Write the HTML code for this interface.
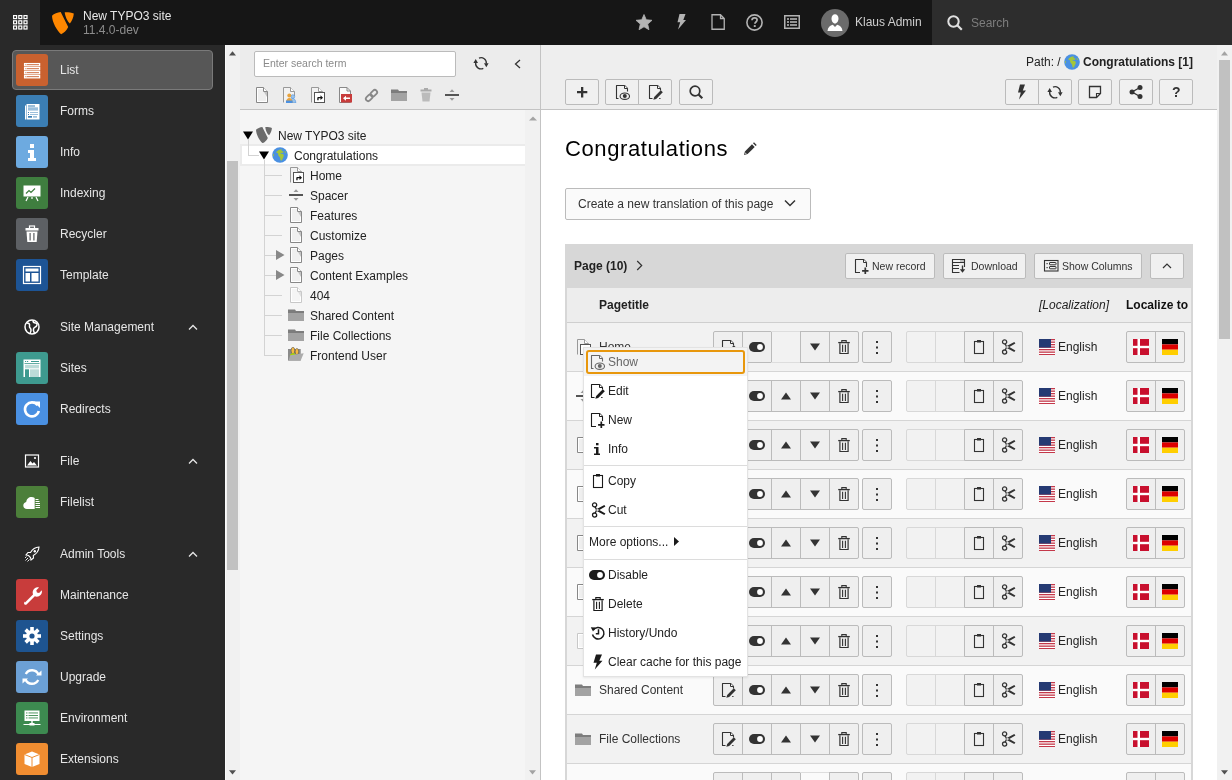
<!DOCTYPE html><html><head><meta charset="utf-8"><style>
html,body{margin:0;padding:0;width:1232px;height:780px;overflow:hidden;background:#fff;font-family:"Liberation Sans",sans-serif;font-size:12px;}
*{box-sizing:border-box}
</style></head><body><div style="position:relative;width:1232px;height:780px;overflow:hidden;will-change:transform">
<div style="position:absolute;left:0px;top:0px;width:1232px;height:45px;background:#161616"></div>
<div style="position:absolute;left:0px;top:0px;width:40px;height:45px;background:#292929"></div>
<svg style="position:absolute;left:13px;top:15px;" width="15" height="15" viewBox="0 0 15 15"><rect x="0.6" y="0.6" width="3" height="3" fill="none" stroke="#fff" stroke-width="1.2"/><rect x="5.8" y="0.6" width="3" height="3" fill="none" stroke="#fff" stroke-width="1.2"/><rect x="11.0" y="0.6" width="3" height="3" fill="none" stroke="#fff" stroke-width="1.2"/><rect x="0.6" y="5.8" width="3" height="3" fill="none" stroke="#fff" stroke-width="1.2"/><rect x="5.8" y="5.8" width="3" height="3" fill="none" stroke="#fff" stroke-width="1.2"/><rect x="11.0" y="5.8" width="3" height="3" fill="none" stroke="#fff" stroke-width="1.2"/><rect x="0.6" y="11.0" width="3" height="3" fill="none" stroke="#fff" stroke-width="1.2"/><rect x="5.8" y="11.0" width="3" height="3" fill="none" stroke="#fff" stroke-width="1.2"/><rect x="11.0" y="11.0" width="3" height="3" fill="none" stroke="#fff" stroke-width="1.2"/></svg>
<svg style="position:absolute;left:52px;top:12px;" width="22" height="23" viewBox="0 0 22 23"><path d="M0 3.7C2 1.7 5.5.3 8.7 0L16.2 15C14.5 18.5 12 20.8 9.1 22.2 5 18.5.2 10.5 0 3.7z M12.7.2C15.5 0 19.5.5 21.8 1.4 21.7 5.2 19.8 9.2 17.9 11.4 15.3 9.2 13.2 4.5 12.7.2z" fill="#ff8700"/></svg>
<div style="position:absolute;left:83px;top:9.84px;font:normal 12px/12px 'Liberation Sans', sans-serif;white-space:nowrap;color:#e8e8e8;">New TYPO3 site</div>
<div style="position:absolute;left:83px;top:23.84px;font:normal 12px/12px 'Liberation Sans', sans-serif;white-space:nowrap;color:#8c8c8c;">11.4.0-dev</div>
<svg style="position:absolute;left:636px;top:14px;" width="16" height="16" viewBox="0 0 16 16"><path d="M8.00 0.50 L10.29 5.74 L15.99 6.30 L11.71 10.11 L12.94 15.70 L8.00 12.80 L3.06 15.70 L4.29 10.11 L0.01 6.30 L5.71 5.74z" fill="#b3b3b3" stroke="#b3b3b3" stroke-width=".8" stroke-linejoin="round"/></svg>
<svg style="position:absolute;left:677px;top:14px;" width="9" height="16" viewBox="0 0 9 16"><path d="M2.5 0H8.5L6.3 6H9L1 15.5l2.2-7.3H.5z" fill="#b3b3b3"/></svg>
<svg style="position:absolute;left:711px;top:14px;" width="14" height="16" viewBox="0 0 14 16"><path d="M1 .75h8.5l3.75 3.75v10.75H1z M9.5 .75v3.75h3.75" fill="none" stroke="#b3b3b3" stroke-width="1.3"/></svg>
<svg style="position:absolute;left:746px;top:14px;" width="17" height="17" viewBox="0 0 17 17"><circle cx="8.5" cy="8.5" r="7.6" fill="none" stroke="#b3b3b3" stroke-width="1.6"/><path d="M6 6.3c0-1.5 1.1-2.4 2.6-2.4 1.5 0 2.5.9 2.5 2.2 0 1.8-2.2 2-2.2 3.6" fill="none" stroke="#b3b3b3" stroke-width="1.7"/><rect x="7.8" y="11.1" width="1.9" height="1.9" fill="#b3b3b3"/></svg>
<svg style="position:absolute;left:784px;top:15px;" width="16" height="14" viewBox="0 0 16 14"><rect x=".75" y=".75" width="14.5" height="12.5" fill="none" stroke="#b3b3b3" stroke-width="1.5"/><rect x="3" y="3.2" width="2" height="1.6" fill="#b3b3b3"/><rect x="6" y="3.2" width="7" height="1.6" fill="#b3b3b3"/><rect x="3" y="6.2" width="2" height="1.6" fill="#b3b3b3"/><rect x="6" y="6.2" width="7" height="1.6" fill="#b3b3b3"/><rect x="3" y="9.2" width="2" height="1.6" fill="#b3b3b3"/><rect x="6" y="9.2" width="7" height="1.6" fill="#b3b3b3"/></svg>
<svg style="position:absolute;left:821px;top:9px;" width="28" height="28" viewBox="0 0 28 28"><circle cx="14" cy="14" r="14" fill="#6b6b6b"/><path d="M10.5 9.5c0-2.6 1.5-4.3 3.5-4.3s3.5 1.7 3.5 4.3c0 2.4-1.5 5-3.5 5s-3.5-2.6-3.5-5zM6.5 22c.3-3.5 2.5-5.5 5.3-6.2l2.2 2.2 2.2-2.2c2.8.7 5 2.7 5.3 6.2z" fill="#fff"/></svg>
<div style="position:absolute;left:855px;top:15.84px;font:normal 12px/12px 'Liberation Sans', sans-serif;white-space:nowrap;color:#cfcfcf;">Klaus Admin</div>
<div style="position:absolute;left:932px;top:0px;width:300px;height:45px;background:#2d2d2d"></div>
<svg style="position:absolute;left:947px;top:15px;" width="16" height="16" viewBox="0 0 16 16"><circle cx="6.5" cy="6.5" r="5.2" fill="none" stroke="#e0e0e0" stroke-width="2"/><path d="M10.3 10.3l4.5 4.5" stroke="#e0e0e0" stroke-width="2.2"/></svg>
<div style="position:absolute;left:971px;top:16.84px;font:normal 12px/12px 'Liberation Sans', sans-serif;white-space:nowrap;color:#7d7d7d;">Search</div>
<div style="position:absolute;left:0px;top:45px;width:225px;height:735px;background:#292929"></div>
<div style="position:absolute;left:12px;top:50px;width:201px;height:40px;background:#575757;border:1px solid #7a7a7a;border-radius:4px"></div>
<div style="position:absolute;left:16px;top:54px;width:32px;height:32px;background:#c9612f;border-radius:3px"></div>
<svg style="position:absolute;left:16px;top:54px;" width="32" height="32" viewBox="0 0 32 32"><g fill="none" stroke="#fff" stroke-width="1.3"><rect x="8.6" y="9.6" width="15" height="2.2"/><rect x="8.6" y="13.6" width="15" height="2.2"/><rect x="8.6" y="17.6" width="15" height="2.2"/><rect x="8.6" y="21.6" width="15" height="2.2"/></g><g fill="#fff"><rect x="9.8" y="10.3" width="1" height="1"/><rect x="9.8" y="14.3" width="1" height="1"/><rect x="9.8" y="18.3" width="1" height="1"/><rect x="9.8" y="22.3" width="1" height="1"/></g></svg>
<div style="position:absolute;left:60px;top:63.84px;font:normal 12px/12px 'Liberation Sans', sans-serif;white-space:nowrap;color:#e6e6e6;">List</div>
<div style="position:absolute;left:16px;top:95px;width:32px;height:32px;background:#3b7eb4;border-radius:3px"></div>
<svg style="position:absolute;left:16px;top:95px;" width="32" height="32" viewBox="0 0 32 32"><path d="M9 10.5h1v14H9z" fill="#fff"/><rect x="10.5" y="9" width="13" height="15.5" fill="#fff"/><rect x="12" y="10.5" width="7" height="1" fill="#3b7eb4"/><rect x="12" y="12.3" width="10" height="3.3" fill="#9bbfdc"/><rect x="12" y="17" width="1" height="1" fill="#3b7eb4"/><rect x="14" y="17" width="8" height="1" fill="#9bbfdc"/><rect x="12" y="19" width="1" height="1" fill="#3b7eb4"/><rect x="14" y="19" width="8" height="1" fill="#9bbfdc"/><rect x="12" y="21" width="4" height="1.7" fill="#3b7eb4"/><rect x="17" y="21" width="4" height="1.7" fill="#9bbfdc"/></svg>
<div style="position:absolute;left:60px;top:104.84px;font:normal 12px/12px 'Liberation Sans', sans-serif;white-space:nowrap;color:#e6e6e6;">Forms</div>
<div style="position:absolute;left:16px;top:136px;width:32px;height:32px;background:#6daae0;border-radius:3px"></div>
<svg style="position:absolute;left:16px;top:136px;" width="32" height="32" viewBox="0 0 32 32"><rect x="14" y="8" width="4" height="4" fill="#fff"/><path d="M12 14h6v8h2v3h-8v-3h2v-5h-2z" fill="#fff"/></svg>
<div style="position:absolute;left:60px;top:145.84px;font:normal 12px/12px 'Liberation Sans', sans-serif;white-space:nowrap;color:#e6e6e6;">Info</div>
<div style="position:absolute;left:16px;top:177px;width:32px;height:32px;background:#3f7e3f;border-radius:3px"></div>
<svg style="position:absolute;left:16px;top:177px;" width="32" height="32" viewBox="0 0 32 32"><rect x="7.5" y="8.5" width="17" height="11" fill="#fff"/><path d="M10 16.5l3-3 2 2 4-4" fill="none" stroke="#3f7e3f" stroke-width="1.2"/><path d="M12 20l-2 4M20 20l2 4M16 20v2" stroke="#fff" stroke-width="1.2"/></svg>
<div style="position:absolute;left:60px;top:186.84px;font:normal 12px/12px 'Liberation Sans', sans-serif;white-space:nowrap;color:#e6e6e6;">Indexing</div>
<div style="position:absolute;left:16px;top:218px;width:32px;height:32px;background:#5d6064;border-radius:3px"></div>
<svg style="position:absolute;left:16px;top:218px;" width="32" height="32" viewBox="0 0 32 32"><rect x="9.5" y="10" width="13" height="2.5" fill="#fff"/><rect x="13.5" y="8" width="5" height="2.5" fill="none" stroke="#fff" stroke-width="1.2"/><path d="M10.5 13.5h11l-.8 10.5h-9.4z" fill="#fff"/><rect x="13.5" y="15" width="1.2" height="7.5" fill="#5d6064"/><rect x="17.3" y="15" width="1.2" height="7.5" fill="#5d6064"/></svg>
<div style="position:absolute;left:60px;top:227.84px;font:normal 12px/12px 'Liberation Sans', sans-serif;white-space:nowrap;color:#e6e6e6;">Recycler</div>
<div style="position:absolute;left:16px;top:259px;width:32px;height:32px;background:#1d5495;border-radius:3px"></div>
<svg style="position:absolute;left:16px;top:259px;" width="32" height="32" viewBox="0 0 32 32"><rect x="7.5" y="7.5" width="17" height="17" fill="none" stroke="#fff" stroke-width="1.2"/><rect x="9.5" y="9.5" width="13" height="3" fill="#fff"/><rect x="9.5" y="14" width="4.5" height="8.5" fill="#fff"/><rect x="15.5" y="14" width="7" height="8.5" fill="#fff"/></svg>
<div style="position:absolute;left:60px;top:268.84px;font:normal 12px/12px 'Liberation Sans', sans-serif;white-space:nowrap;color:#e6e6e6;">Template</div>
<div style="position:absolute;left:16px;top:352px;width:32px;height:32px;background:#3e9a8f;border-radius:3px"></div>
<svg style="position:absolute;left:16px;top:352px;" width="32" height="32" viewBox="0 0 32 32"><rect x="7.5" y="7.5" width="17" height="17.5" fill="#fff"/><rect x="9" y="9" width="1.2" height="1" fill="#3e9a8f"/><rect x="11" y="9" width="1.2" height="1" fill="#3e9a8f"/><rect x="15" y="9" width="8" height="1" fill="#3e9a8f"/><rect x="8.5" y="11" width="15" height="0.8" fill="#3e9a8f"/><rect x="9" y="12.8" width="14" height="3.5" fill="#3e9a8f" opacity=".35"/><rect x="9" y="17.3" width="4" height="7.7" fill="#3e9a8f"/><rect x="14" y="17.3" width="9" height="7.7" fill="#3e9a8f" opacity=".35"/></svg>
<div style="position:absolute;left:60px;top:361.84px;font:normal 12px/12px 'Liberation Sans', sans-serif;white-space:nowrap;color:#e6e6e6;">Sites</div>
<div style="position:absolute;left:16px;top:393px;width:32px;height:32px;background:#4a90e2;border-radius:3px"></div>
<svg style="position:absolute;left:16px;top:393px;" width="32" height="32" viewBox="0 0 32 32"><path d="M21.6 12.2A7 7 0 1 0 22.8 18" fill="none" stroke="#fff" stroke-width="2.6"/><path d="M17.5 8.5h6.5v6.5z" fill="#fff"/></svg>
<div style="position:absolute;left:60px;top:402.84px;font:normal 12px/12px 'Liberation Sans', sans-serif;white-space:nowrap;color:#e6e6e6;">Redirects</div>
<div style="position:absolute;left:16px;top:486px;width:32px;height:32px;background:#4c7f3a;border-radius:3px"></div>
<svg style="position:absolute;left:16px;top:486px;" width="32" height="32" viewBox="0 0 32 32"><path d="M11 23c-2.2 0-3.7-1.6-3.7-3.6 0-1.8 1.2-3.2 2.9-3.5.3-2.8 2.6-4.9 5.3-4.9 1.2 0 2.3.4 3.2 1.1V23z" fill="#fff"/><g fill="#fff"><rect x="19.5" y="13" width="3" height="1"/><rect x="19.5" y="15" width="4" height="1"/><rect x="19.5" y="17" width="4.5" height="1"/><rect x="19.5" y="19" width="4.5" height="1"/><rect x="19.5" y="21" width="4.5" height="1"/></g></svg>
<div style="position:absolute;left:60px;top:495.84px;font:normal 12px/12px 'Liberation Sans', sans-serif;white-space:nowrap;color:#e6e6e6;">Filelist</div>
<div style="position:absolute;left:16px;top:579px;width:32px;height:32px;background:#c83c3b;border-radius:3px"></div>
<svg style="position:absolute;left:16px;top:579px;" width="32" height="32" viewBox="0 0 32 32"><path d="M9 23.5l8-8c-.8-2.2-.2-4.5 1.5-6 1.3-1.1 3-1.4 4.5-1l-2.7 2.7.6 2.2 2.2.6 2.7-2.7c.4 1.5.1 3.2-1 4.5-1.5 1.7-3.8 2.3-6 1.5l-8 8c-.7.7-1.8.7-2.4 0-.5-.6-.5-1.6.6-2.8z" fill="#fff"/></svg>
<div style="position:absolute;left:60px;top:588.84px;font:normal 12px/12px 'Liberation Sans', sans-serif;white-space:nowrap;color:#e6e6e6;">Maintenance</div>
<div style="position:absolute;left:16px;top:620px;width:32px;height:32px;background:#1e5490;border-radius:3px"></div>
<svg style="position:absolute;left:16px;top:620px;" width="32" height="32" viewBox="0 0 32 32"><g transform="translate(16 16)" fill="#fff"><circle r="6"/><rect x="-1.8" y="-9" width="3.6" height="4" transform="rotate(0)"/><rect x="-1.8" y="-9" width="3.6" height="4" transform="rotate(45)"/><rect x="-1.8" y="-9" width="3.6" height="4" transform="rotate(90)"/><rect x="-1.8" y="-9" width="3.6" height="4" transform="rotate(135)"/><rect x="-1.8" y="-9" width="3.6" height="4" transform="rotate(180)"/><rect x="-1.8" y="-9" width="3.6" height="4" transform="rotate(225)"/><rect x="-1.8" y="-9" width="3.6" height="4" transform="rotate(270)"/><rect x="-1.8" y="-9" width="3.6" height="4" transform="rotate(315)"/><circle r="2.6" fill="#1e5490"/></g></svg>
<div style="position:absolute;left:60px;top:629.84px;font:normal 12px/12px 'Liberation Sans', sans-serif;white-space:nowrap;color:#e6e6e6;">Settings</div>
<div style="position:absolute;left:16px;top:661px;width:32px;height:32px;background:#6ca0d5;border-radius:3px"></div>
<svg style="position:absolute;left:16px;top:661px;" width="32" height="32" viewBox="0 0 32 32"><path d="M22.5 13.5A7 7 0 0 0 9.8 13M9.5 18.5A7 7 0 0 0 22.2 19" fill="none" stroke="#fff" stroke-width="2.4"/><path d="M20 14.5h5.5v-5z M12 17.5H6.5v5z" fill="#fff"/></svg>
<div style="position:absolute;left:60px;top:670.84px;font:normal 12px/12px 'Liberation Sans', sans-serif;white-space:nowrap;color:#e6e6e6;">Upgrade</div>
<div style="position:absolute;left:16px;top:702px;width:32px;height:32px;background:#3d8a50;border-radius:3px"></div>
<svg style="position:absolute;left:16px;top:702px;" width="32" height="32" viewBox="0 0 32 32"><rect x="8.5" y="8.5" width="15" height="10.5" fill="#fff"/><g fill="#3d8a50"><rect x="10" y="10.5" width="1.5" height=".9"/><rect x="12.5" y="10.5" width="9.5" height=".9"/><rect x="10" y="13" width="1.5" height=".9"/><rect x="12.5" y="13" width="9.5" height=".9"/><rect x="10" y="15.5" width="1.5" height=".9"/><rect x="12.5" y="15.5" width="9.5" height=".9"/></g><rect x="15.3" y="19" width="1.4" height="2.5" fill="#fff"/><rect x="13.5" y="21" width="5" height="2.5" fill="#fff"/><rect x="7.5" y="22" width="17" height="1" fill="#fff"/></svg>
<div style="position:absolute;left:60px;top:711.84px;font:normal 12px/12px 'Liberation Sans', sans-serif;white-space:nowrap;color:#e6e6e6;">Environment</div>
<div style="position:absolute;left:16px;top:743px;width:32px;height:32px;background:#f08d31;border-radius:3px"></div>
<svg style="position:absolute;left:16px;top:743px;" width="32" height="32" viewBox="0 0 32 32"><path d="M16 8.5l7.5 3v9.5L16 24l-7.5-3v-9.5z" fill="#fff"/><path d="M8.5 11.5L16 14.5l7.5-3M16 14.5V24" fill="none" stroke="#f08d31" stroke-width="1"/></svg>
<div style="position:absolute;left:60px;top:752.84px;font:normal 12px/12px 'Liberation Sans', sans-serif;white-space:nowrap;color:#e6e6e6;">Extensions</div>
<svg style="position:absolute;left:24px;top:319px;" width="16" height="16" viewBox="0 0 16 16"><circle cx="8" cy="8" r="7" fill="none" stroke="#fff" stroke-width="1.5"/><path d="M3 4c2 0 3 1 2.5 3s1.5 2 1.5 4-1 3-1 3M9 1.5c0 2 1 2.5 2.5 2.5s2 1.5 1 3-2.5 1-3 3 .5 3 1 4" fill="none" stroke="#fff" stroke-width="1.5"/></svg>
<div style="position:absolute;left:60px;top:320.84px;font:normal 12px/12px 'Liberation Sans', sans-serif;white-space:nowrap;color:#e6e6e6;">Site Management</div>
<svg style="position:absolute;left:188px;top:324px;" width="10" height="6" viewBox="0 0 10 6"><path d="M1 5.5L5 1.5l4 4" fill="none" stroke="#e6e6e6" stroke-width="1.3"/></svg>
<svg style="position:absolute;left:24px;top:453px;" width="16" height="16" viewBox="0 0 16 16"><rect x="1.5" y="2" width="13" height="12" fill="none" stroke="#fff" stroke-width="1.2"/><path d="M3 12.5l3.5-4.5 2 2.5 1.5-1.5 3 3.5z" fill="#fff"/><circle cx="11" cy="5" r="1.1" fill="#fff"/></svg>
<div style="position:absolute;left:60px;top:454.84px;font:normal 12px/12px 'Liberation Sans', sans-serif;white-space:nowrap;color:#e6e6e6;">File</div>
<svg style="position:absolute;left:188px;top:458px;" width="10" height="6" viewBox="0 0 10 6"><path d="M1 5.5L5 1.5l4 4" fill="none" stroke="#e6e6e6" stroke-width="1.3"/></svg>
<svg style="position:absolute;left:24px;top:546px;" width="16" height="16" viewBox="0 0 16 16"><path d="M15 1c-3.5.2-6.5 2.2-8.5 5.5L4 6.5 2 9l2.5.5 2 2L7 14l2.5-2-.2-2.5C12.7 7.5 14.8 4.5 15 1z" fill="none" stroke="#fff" stroke-width="1.1"/><circle cx="10.8" cy="5.2" r="1.2" fill="#fff"/><path d="M4 12l-2.5 2.5M5.5 13.5l-2 2M2.5 10.5l-1.5 1.5" stroke="#fff" stroke-width=".9"/></svg>
<div style="position:absolute;left:60px;top:547.84px;font:normal 12px/12px 'Liberation Sans', sans-serif;white-space:nowrap;color:#e6e6e6;">Admin Tools</div>
<svg style="position:absolute;left:188px;top:551px;" width="10" height="6" viewBox="0 0 10 6"><path d="M1 5.5L5 1.5l4 4" fill="none" stroke="#e6e6e6" stroke-width="1.3"/></svg>
<div style="position:absolute;left:225px;top:45px;width:15px;height:735px;background:#f1f1f1;border-left:1px solid #fafafa"></div>
<div style="position:absolute;left:227px;top:161px;width:11px;height:409px;background:#c1c1c1"></div>
<svg style="position:absolute;left:229px;top:50.5px;" width="7" height="5" viewBox="0 0 7 5"><path d="M0 4.5L3.5 .3 7 4.5z" fill="#505050"/></svg>
<svg style="position:absolute;left:229px;top:769.5px;" width="7" height="5" viewBox="0 0 7 5"><path d="M0 .3L3.5 4.5 7 .3z" fill="#505050"/></svg>
<div style="position:absolute;left:240px;top:45px;width:300px;height:64px;background:#ececec"></div>
<div style="position:absolute;left:240px;top:109px;width:300px;height:1px;background:#c3c3c3"></div>
<div style="position:absolute;left:240px;top:110px;width:285px;height:670px;background:#f5f5f5"></div>
<div style="position:absolute;left:525px;top:110px;width:15px;height:670px;background:#f1f1f1"></div>
<svg style="position:absolute;left:529px;top:115.5px;" width="8" height="5" viewBox="0 0 8 5"><path d="M0 4.5L4 .5 8 4.5z" fill="#a3a3a3"/></svg>
<svg style="position:absolute;left:529px;top:769.5px;" width="7" height="5" viewBox="0 0 7 5"><path d="M0 .3L3.5 4.5 7 .3z" fill="#a3a3a3"/></svg>
<div style="position:absolute;left:540px;top:45px;width:1px;height:735px;background:#c3c3c3"></div>
<div style="position:absolute;left:254px;top:51px;width:202px;height:26px;background:#fff;border:1px solid #bbb;border-radius:2px"></div>
<div style="position:absolute;left:263px;top:58.11px;font:normal 10.5px/10.5px 'Liberation Sans', sans-serif;white-space:nowrap;color:#8a8a8a;">Enter search term</div>
<svg style="position:absolute;left:473px;top:55px;" width="16" height="16" viewBox="0 0 16 16"><path d="M6 3.1A5.3 5.3 0 0 1 13.3 8.6M10.3 13.3A5.3 5.3 0 0 1 2.7 7.8" fill="none" stroke="#333" stroke-width="1.35"/><path d="M11 8.3H15.6L13.3 12.3z M0.4 7.9H5L2.7 3.9z" fill="#333"/></svg>
<svg style="position:absolute;left:514px;top:59px;" width="7" height="10" viewBox="0 0 7 10"><path d="M6 1L1.5 5 6 9" fill="none" stroke="#333" stroke-width="1.3"/></svg>
<svg style="position:absolute;left:255px;top:87px;" width="16" height="16" viewBox="0 0 16 16"><path d="M1.5 .5H8.5L12.5 4.5V15.5H1.5Z" fill="#fff" stroke="#888"/><path d="M3 2H8V5H11V14H3z" fill="#efefef"/><path d="M8.5 .5V4.5H12.5" fill="#fff" stroke="#888"/><path d="M9 5H12V10z" fill="#c4c4c4"/></svg>
<svg style="position:absolute;left:282px;top:87px;" width="16" height="16" viewBox="0 0 16 16"><path d="M1.5 15.5V.5H8.5L12.5 4.5V9" fill="#f2f2f2" stroke="#999"/><path d="M8.5 .5V4.5H12.5" fill="#fff" stroke="#999"/><circle cx="10.8" cy="9.6" r="1.9" fill="#9cc3e8" stroke="#4a90e2" stroke-width=".6"/><path d="M7.8 16c0-2.8 1.3-4.6 3-4.6s3 1.8 3 4.6z" fill="#9cc3e8" stroke="#4a90e2" stroke-width=".6"/><circle cx="7.3" cy="8.6" r="2" fill="#e8a33d"/><path d="M4 16c0-3.2 1.5-5 3.3-5s3.3 1.8 3.3 5z" fill="#e8a33d"/><path d="M4 13.5h6.6V16H4z" fill="#4a90e2"/></svg>
<svg style="position:absolute;left:310px;top:87px;" width="16" height="16" viewBox="0 0 16 16"><path d="M1.5 15.5V.5H8.5L12.5 4.5V5.5" fill="#f2f2f2" stroke="#999"/><path d="M8.5 .5V4.5H12.5" fill="#fff" stroke="#999"/><rect x="4.5" y="5.5" width="10" height="10" fill="#fff" stroke="#555"/><path d="M7.3 13.2V11.2c0-.7.4-1.1 1.1-1.1H10.5V8.3l2.5 2.4-2.5 2.4V11.3H8.6V13.2z" fill="#111"/></svg>
<svg style="position:absolute;left:337px;top:87px;" width="16" height="16" viewBox="0 0 16 16"><path d="M2.5 .5h7.5l3.5 3.5v11.5h-11z" fill="#fafafa" stroke="#888"/><path d="M10 .5v3.5h3.5" fill="none" stroke="#888"/><rect x="4" y="7" width="11" height="8.5" fill="#c83c3b"/><path d="M6 11.2l3-2.5v1.7h4v1.6H9v1.7z" fill="#fff"/></svg>
<svg style="position:absolute;left:364px;top:87px;" width="16" height="16" viewBox="0 0 16 16"><g transform="rotate(-45 7.5 8.5)" fill="none" stroke="#888" stroke-width="1.8"><rect x="0.5" y="6.2" width="7.5" height="4.6" rx="2.3"/><rect x="7" y="6.2" width="7.5" height="4.6" rx="2.3"/></g></svg>
<svg style="position:absolute;left:391px;top:87px;" width="16" height="16" viewBox="0 0 16 16"><path d="M0 2.5H7L8 4H16V6H0z" fill="#7d7d7d"/><rect x="0" y="6" width="16" height="8" fill="#a3a3a3"/></svg>
<svg style="position:absolute;left:418px;top:87px;" width="16" height="16" viewBox="0 0 16 16"><rect x="2.5" y="2.5" width="11" height="2" fill="#aaa"/><rect x="6" y="1" width="4" height="2" fill="#aaa"/><path d="M3.5 5.5h9l-1 9h-7z" fill="#bbb"/></svg>
<svg style="position:absolute;left:445px;top:87px;" width="16" height="16" viewBox="0 0 16 16"><rect x="0" y="7" width="14" height="2" fill="#555"/><path d="M4.5 5L7 2.3 9.5 5z M4.5 11L7 13.7 9.5 11z" fill="#999"/></svg>
<svg style="position:absolute;left:243px;top:131px;" width="10" height="9" viewBox="0 0 10 9"><path d="M0 .5h10L5 8.5z" fill="#000"/></svg>
<div style="position:absolute;left:248px;top:139px;width:1px;height:17px;background:#d3d3d3"></div>
<div style="position:absolute;left:248px;top:155px;width:12px;height:1px;background:#d3d3d3"></div>
<svg style="position:absolute;left:256px;top:127px;" width="16" height="16" viewBox="0 0 16 16"><g transform="scale(.73)"><path d="M0 3.7C2 1.7 5.5.3 8.7 0L16.2 15C14.5 18.5 12 20.8 9.1 22.2 5 18.5.2 10.5 0 3.7z M12.7.2C15.5 0 19.5.5 21.8 1.4 21.7 5.2 19.8 9.2 17.9 11.4 15.3 9.2 13.2 4.5 12.7.2z" fill="#6b6b6b"/></g></svg>
<div style="position:absolute;left:278px;top:129.84px;font:normal 12px/12px 'Liberation Sans', sans-serif;white-space:nowrap;color:#222;">New TYPO3 site</div>
<div style="position:absolute;left:240px;top:144px;width:285px;height:22px;background:#fff;border:2px solid #ebebeb;border-right:none"></div>
<div style="position:absolute;left:248px;top:139px;width:1px;height:17px;background:#d3d3d3"></div>
<div style="position:absolute;left:248px;top:155px;width:11px;height:1px;background:#d3d3d3"></div>
<svg style="position:absolute;left:259px;top:151px;" width="10" height="9" viewBox="0 0 10 9"><path d="M0 .5h10L5 8.5z" fill="#000"/></svg>
<svg style="position:absolute;left:272px;top:147px;" width="16" height="16" viewBox="0 0 16 16"><circle cx="8" cy="8" r="7.8" fill="#4a90e2"/><path d="M6.3 3.2c1-.6 2.6-.9 3.8-.4.4.5-.6.9-1.2 1.1.9.2 1.9.1 2.5.6.4.6-.1 1.2-.8 1.3-1 .1-1.9.3-2.4.8.7.4 1.8.2 2.6.5 1 .5 1.2 1.6.8 2.6-.5 1-1.1 1.9-1.4 3-.3.8-1 1.2-1.5.6-.5-.9-.3-2-.7-2.9-.3-.8-1.3-1.1-1.6-1.9-.3-.8 0-1.7-.6-2.3-.5-.5-1.4-.3-1.8-.9.6-.9 1.5-1.6 2.3-2.1z M1.5 6.8c.5.2.7.8.6 1.3-.2.6-.7 1-.9 1.6-.3-.9-.2-2 .3-2.9z M12.8 3.8c.6.5 1.2 1.3 1.5 2-.4.2-1 0-1.3-.4-.3-.5-.4-1-.2-1.6z" fill="#a4c639"/></svg>
<div style="position:absolute;left:294px;top:149.84px;font:normal 12px/12px 'Liberation Sans', sans-serif;white-space:nowrap;color:#222;">Congratulations</div>
<div style="position:absolute;left:264px;top:160px;width:1px;height:196px;background:#d3d3d3"></div>
<div style="position:absolute;left:265px;top:175px;width:17px;height:1px;background:#d3d3d3"></div>
<svg style="position:absolute;left:289px;top:167px;" width="16" height="16" viewBox="0 0 16 16"><path d="M1.5 15.5V.5H8.5L12.5 4.5V5.5" fill="#f2f2f2" stroke="#999"/><path d="M8.5 .5V4.5H12.5" fill="#fff" stroke="#999"/><rect x="4.5" y="5.5" width="10" height="10" fill="#fff" stroke="#555"/><path d="M7.3 13.2V11.2c0-.7.4-1.1 1.1-1.1H10.5V8.3l2.5 2.4-2.5 2.4V11.3H8.6V13.2z" fill="#111"/></svg>
<div style="position:absolute;left:310px;top:169.84px;font:normal 12px/12px 'Liberation Sans', sans-serif;white-space:nowrap;color:#222;">Home</div>
<div style="position:absolute;left:265px;top:195px;width:17px;height:1px;background:#d3d3d3"></div>
<svg style="position:absolute;left:289px;top:187px;" width="16" height="16" viewBox="0 0 16 16"><rect x="0" y="7" width="14" height="2" fill="#555"/><path d="M4.5 5L7 2.3 9.5 5z M4.5 11L7 13.7 9.5 11z" fill="#999"/></svg>
<div style="position:absolute;left:310px;top:189.84px;font:normal 12px/12px 'Liberation Sans', sans-serif;white-space:nowrap;color:#222;">Spacer</div>
<div style="position:absolute;left:265px;top:215px;width:17px;height:1px;background:#d3d3d3"></div>
<svg style="position:absolute;left:289px;top:207px;" width="16" height="16" viewBox="0 0 16 16"><path d="M1.5 .5H8.5L12.5 4.5V15.5H1.5Z" fill="#fff" stroke="#888"/><path d="M3 2H8V5H11V14H3z" fill="#efefef"/><path d="M8.5 .5V4.5H12.5" fill="#fff" stroke="#888"/><path d="M9 5H12V10z" fill="#c4c4c4"/></svg>
<div style="position:absolute;left:310px;top:209.84px;font:normal 12px/12px 'Liberation Sans', sans-serif;white-space:nowrap;color:#222;">Features</div>
<div style="position:absolute;left:265px;top:235px;width:17px;height:1px;background:#d3d3d3"></div>
<svg style="position:absolute;left:289px;top:227px;" width="16" height="16" viewBox="0 0 16 16"><path d="M1.5 .5H8.5L12.5 4.5V15.5H1.5Z" fill="#fff" stroke="#888"/><path d="M3 2H8V5H11V14H3z" fill="#efefef"/><path d="M8.5 .5V4.5H12.5" fill="#fff" stroke="#888"/><path d="M9 5H12V10z" fill="#c4c4c4"/></svg>
<div style="position:absolute;left:310px;top:229.84px;font:normal 12px/12px 'Liberation Sans', sans-serif;white-space:nowrap;color:#222;">Customize</div>
<div style="position:absolute;left:265px;top:255px;width:17px;height:1px;background:#d3d3d3"></div>
<svg style="position:absolute;left:289px;top:247px;" width="16" height="16" viewBox="0 0 16 16"><path d="M1.5 .5H8.5L12.5 4.5V15.5H1.5Z" fill="#fff" stroke="#888"/><path d="M3 2H8V5H11V14H3z" fill="#efefef"/><path d="M8.5 .5V4.5H12.5" fill="#fff" stroke="#888"/><path d="M9 5H12V10z" fill="#c4c4c4"/></svg>
<svg style="position:absolute;left:276px;top:250px;" width="9" height="10" viewBox="0 0 9 10"><path d="M0 0l8.5 5L0 10z" fill="#888"/></svg>
<div style="position:absolute;left:310px;top:249.84px;font:normal 12px/12px 'Liberation Sans', sans-serif;white-space:nowrap;color:#222;">Pages</div>
<div style="position:absolute;left:265px;top:275px;width:17px;height:1px;background:#d3d3d3"></div>
<svg style="position:absolute;left:289px;top:267px;" width="16" height="16" viewBox="0 0 16 16"><path d="M1.5 .5H8.5L12.5 4.5V15.5H1.5Z" fill="#fff" stroke="#888"/><path d="M3 2H8V5H11V14H3z" fill="#efefef"/><path d="M8.5 .5V4.5H12.5" fill="#fff" stroke="#888"/><path d="M9 5H12V10z" fill="#c4c4c4"/></svg>
<svg style="position:absolute;left:276px;top:270px;" width="9" height="10" viewBox="0 0 9 10"><path d="M0 0l8.5 5L0 10z" fill="#888"/></svg>
<div style="position:absolute;left:310px;top:269.84px;font:normal 12px/12px 'Liberation Sans', sans-serif;white-space:nowrap;color:#222;">Content Examples</div>
<div style="position:absolute;left:265px;top:295px;width:17px;height:1px;background:#d3d3d3"></div>
<svg style="position:absolute;left:289px;top:287px;" width="16" height="16" viewBox="0 0 16 16"><path d="M1.5 .5H8.5L12.5 4.5V15.5H1.5Z" fill="#fff" stroke="#c8c8c8"/><path d="M3 2H8V5H11V14H3z" fill="#f5f5f5"/><path d="M8.5 .5V4.5H12.5" fill="#fff" stroke="#c8c8c8"/><path d="M9 5H12V10z" fill="#e0e0e0"/></svg>
<div style="position:absolute;left:310px;top:289.84px;font:normal 12px/12px 'Liberation Sans', sans-serif;white-space:nowrap;color:#222;">404</div>
<div style="position:absolute;left:265px;top:315px;width:17px;height:1px;background:#d3d3d3"></div>
<svg style="position:absolute;left:288px;top:307px;" width="16" height="16" viewBox="0 0 16 16"><path d="M0 2.5H7L8 4H16V6H0z" fill="#7d7d7d"/><rect x="0" y="6" width="16" height="8" fill="#a3a3a3"/></svg>
<div style="position:absolute;left:310px;top:309.84px;font:normal 12px/12px 'Liberation Sans', sans-serif;white-space:nowrap;color:#222;">Shared Content</div>
<div style="position:absolute;left:265px;top:335px;width:17px;height:1px;background:#d3d3d3"></div>
<svg style="position:absolute;left:288px;top:327px;" width="16" height="16" viewBox="0 0 16 16"><path d="M0 2.5H7L8 4H16V6H0z" fill="#7d7d7d"/><rect x="0" y="6" width="16" height="8" fill="#a3a3a3"/></svg>
<div style="position:absolute;left:310px;top:329.84px;font:normal 12px/12px 'Liberation Sans', sans-serif;white-space:nowrap;color:#222;">File Collections</div>
<div style="position:absolute;left:265px;top:355px;width:17px;height:1px;background:#d3d3d3"></div>
<svg style="position:absolute;left:288px;top:347px;" width="16" height="16" viewBox="0 0 16 16"><rect x="0" y="2" width="12.7" height="11.6" fill="#8a8a8a"/><ellipse cx="4.9" cy="3.6" rx="1.8" ry="3.4" fill="#f5b942" stroke="#555" stroke-width=".6"/><ellipse cx="8.9" cy="4.6" rx="1.7" ry="3.2" fill="#f5b942" stroke="#555" stroke-width=".6"/><path d="M1.8 9c.2-2 1.8-3 3.8-2.8 1.2.1 1.8.6 2.2 1.4L7 9z" fill="#a8d600"/><path d="M.6 13.6L2.2 8.3 15.7 6.2 12.7 13.6z" fill="#ababab"/></svg>
<div style="position:absolute;left:310px;top:349.84px;font:normal 12px/12px 'Liberation Sans', sans-serif;white-space:nowrap;color:#222;">Frontend User</div>
<div style="position:absolute;left:541px;top:45px;width:676px;height:64px;background:#eeeeee"></div>
<div style="position:absolute;left:541px;top:109px;width:676px;height:1px;background:#c3c3c3"></div>
<div style="position:absolute;left:1217px;top:45px;width:15px;height:735px;background:#f1f1f1"></div>
<div style="position:absolute;left:1219px;top:60px;width:11px;height:279px;background:#c1c1c1"></div>
<svg style="position:absolute;left:1221px;top:50.5px;" width="7" height="5" viewBox="0 0 7 5"><path d="M0 4.5L3.5 .3 7 4.5z" fill="#a3a3a3"/></svg>
<svg style="position:absolute;left:1221px;top:769.5px;" width="7" height="5" viewBox="0 0 7 5"><path d="M0 .3L3.5 4.5 7 .3z" fill="#505050"/></svg>
<div style="position:absolute;left:1026px;top:55.84px;font:normal 12px/12px 'Liberation Sans', sans-serif;white-space:nowrap;color:#222;">Path: /</div>
<svg style="position:absolute;left:1064px;top:54px;" width="16" height="16" viewBox="0 0 16 16"><circle cx="8" cy="8" r="7.8" fill="#4a90e2"/><path d="M6.3 3.2c1-.6 2.6-.9 3.8-.4.4.5-.6.9-1.2 1.1.9.2 1.9.1 2.5.6.4.6-.1 1.2-.8 1.3-1 .1-1.9.3-2.4.8.7.4 1.8.2 2.6.5 1 .5 1.2 1.6.8 2.6-.5 1-1.1 1.9-1.4 3-.3.8-1 1.2-1.5.6-.5-.9-.3-2-.7-2.9-.3-.8-1.3-1.1-1.6-1.9-.3-.8 0-1.7-.6-2.3-.5-.5-1.4-.3-1.8-.9.6-.9 1.5-1.6 2.3-2.1z M1.5 6.8c.5.2.7.8.6 1.3-.2.6-.7 1-.9 1.6-.3-.9-.2-2 .3-2.9z M12.8 3.8c.6.5 1.2 1.3 1.5 2-.4.2-1 0-1.3-.4-.3-.5-.4-1-.2-1.6z" fill="#a4c639"/></svg>
<div style="position:absolute;left:1083px;top:55.84px;font:bold 12px/12px 'Liberation Sans', sans-serif;white-space:nowrap;color:#222;">Congratulations [1]</div>
<div style="position:absolute;left:565px;top:79px;width:34px;height:26px;background:#f0f0f0;border:1px solid #bbb;border-radius:2px;"></div>
<svg style="position:absolute;left:574px;top:84px;" width="16" height="16" viewBox="0 0 16 16"><path d="M7 3h2.3v10.5H7z M3 7.05h10.3v2.3H3z" fill="#333"/></svg>
<div style="position:absolute;left:605px;top:79px;width:34px;height:26px;background:#f0f0f0;border:1px solid #bbb;border-radius:2px;border-top-right-radius:0;border-bottom-right-radius:0;"></div><div style="position:absolute;left:638px;top:79px;width:33px;height:26px;background:#f0f0f0;border:1px solid #bbb;border-radius:2px;border-top-left-radius:0;border-bottom-left-radius:0;margin-left:0;"></div>
<div style="position:absolute;left:638px;top:79px;width:34px;height:26px;background:#f0f0f0;border:1px solid #bbb;border-radius:2px;border-top-left-radius:0;border-bottom-left-radius:0"></div>
<svg style="position:absolute;left:614px;top:84px;" width="16" height="16" viewBox="0 0 16 16"><path d="M4.5 14.5H2.5V1.5H10.5L13.5 4.5V7.5" fill="none" stroke="#333" stroke-width="1.1" stroke-linejoin="round"/><path d="M10.5 1.5V4.5H13.5" fill="#fff" stroke="#333" stroke-width="1"/><ellipse cx="10.8" cy="12.2" rx="4.7" ry="3.2" fill="#eee" stroke="#333" stroke-width="1.1"/><circle cx="10.8" cy="12" r="2" fill="#333"/></svg>
<svg style="position:absolute;left:647px;top:84px;" width="16" height="16" viewBox="0 0 16 16"><path d="M5.5 14.5H2.5V1.5H10.5L13.5 4.5V6.5" fill="none" stroke="#333" stroke-width="1.1" stroke-linejoin="round"/><path d="M10.5 1.5V4.5H13.5" fill="#fff" stroke="#333" stroke-width="1"/><path d="M6.3 15.8l.9-2.9 6.6-6.6 2 2-6.6 6.6z" fill="#333"/><path d="M12.2 14.5h1.3" stroke="#333" stroke-width="1.1"/></svg>
<div style="position:absolute;left:679px;top:79px;width:34px;height:26px;background:#f0f0f0;border:1px solid #bbb;border-radius:2px;"></div>
<svg style="position:absolute;left:688px;top:84px;" width="16" height="16" viewBox="0 0 16 16"><circle cx="7" cy="7" r="4.8" fill="none" stroke="#333" stroke-width="1.7"/><path d="M10.3 10.3l4 4" stroke="#333" stroke-width="2.2"/></svg>
<div style="position:absolute;left:1005px;top:79px;width:34px;height:26px;background:#f0f0f0;border:1px solid #bbb;border-radius:2px;border-top-right-radius:0;border-bottom-right-radius:0;"></div><div style="position:absolute;left:1038px;top:79px;width:33px;height:26px;background:#f0f0f0;border:1px solid #bbb;border-radius:2px;border-top-left-radius:0;border-bottom-left-radius:0;margin-left:0;"></div>
<div style="position:absolute;left:1038px;top:79px;width:34px;height:26px;background:#f0f0f0;border:1px solid #bbb;border-radius:2px;border-top-left-radius:0;border-bottom-left-radius:0"></div>
<svg style="position:absolute;left:1014px;top:84px;" width="16" height="16" viewBox="0 0 16 16"><path d="M6 .5h5L8.8 6.5h3.2L5 15.5l1.8-7H4z" fill="#333"/></svg>
<svg style="position:absolute;left:1047px;top:84px;" width="16" height="16" viewBox="0 0 16 16"><path d="M6 3.1A5.3 5.3 0 0 1 13.3 8.6M10.3 13.3A5.3 5.3 0 0 1 2.7 7.8" fill="none" stroke="#333" stroke-width="1.35"/><path d="M11 8.3H15.6L13.3 12.3z M0.4 7.9H5L2.7 3.9z" fill="#333"/></svg>
<div style="position:absolute;left:1078px;top:79px;width:34px;height:26px;background:#f0f0f0;border:1px solid #bbb;border-radius:2px;"></div>
<svg style="position:absolute;left:1087px;top:84px;" width="16" height="16" viewBox="0 0 16 16"><path d="M2.5 2.5h11v7l-4 4h-7z" fill="none" stroke="#333" stroke-width="1.3"/><path d="M13.5 9.5h-4v4" fill="none" stroke="#333" stroke-width="1.1"/></svg>
<div style="position:absolute;left:1119px;top:79px;width:34px;height:26px;background:#f0f0f0;border:1px solid #bbb;border-radius:2px;"></div>
<svg style="position:absolute;left:1128px;top:84px;" width="16" height="16" viewBox="0 0 16 16"><circle cx="12" cy="3.5" r="2.5" fill="#333"/><circle cx="4" cy="8" r="2.5" fill="#333"/><circle cx="12" cy="12.5" r="2.5" fill="#333"/><path d="M12 3.5L4 8l8 4.5" fill="none" stroke="#333" stroke-width="1.4"/></svg>
<div style="position:absolute;left:1159px;top:79px;width:34px;height:26px;background:#f0f0f0;border:1px solid #bbb;border-radius:2px;"></div>
<div style="position:absolute;left:1172px;top:84.65px;font:bold 14px/14px 'Liberation Sans', sans-serif;white-space:nowrap;color:#333;">?</div>
<div style="position:absolute;left:565px;top:137.88px;font:normal 22px/22px 'Liberation Sans', sans-serif;white-space:nowrap;color:#000;letter-spacing:.6px">Congratulations</div>
<svg style="position:absolute;left:743px;top:142px;" width="14" height="14" viewBox="0 0 14 14"><path d="M1 13l.9-3.6L9 2.3l2.7 2.7-7.1 7.1z M10 1.3l1-1 2.7 2.7-1 1z" fill="#333"/><path d="M2.2 12l.4-1.5 1.1 1.1z" fill="#fff"/></svg>
<div style="position:absolute;left:565px;top:188px;width:246px;height:32px;background:#fafafa;border:1px solid #bbb;border-radius:2px"></div>
<div style="position:absolute;left:578px;top:197.84px;font:normal 12px/12px 'Liberation Sans', sans-serif;white-space:nowrap;color:#333;">Create a new translation of this page</div>
<svg style="position:absolute;left:784px;top:199px;" width="12" height="8" viewBox="0 0 12 8"><path d="M1 1.5l5 5 5-5" fill="none" stroke="#333" stroke-width="1.5"/></svg>
<div style="position:absolute;left:565px;top:244px;width:628px;height:536px;background:#d7d7d7"></div>
<div style="position:absolute;left:574px;top:259.84px;font:bold 12px/12px 'Liberation Sans', sans-serif;white-space:nowrap;color:#222;">Page (10)</div>
<svg style="position:absolute;left:636px;top:260px;" width="7" height="11" viewBox="0 0 7 11"><path d="M1.2 1l4.5 4.5L1.2 10" fill="none" stroke="#333" stroke-width="1.2"/></svg>
<div style="position:absolute;left:845px;top:253px;width:90px;height:26px;background:#f0f0f0;border:1px solid #bbb;border-radius:2px;background:#f0f0f0"></div>
<div style="position:absolute;left:943px;top:253px;width:83px;height:26px;background:#f0f0f0;border:1px solid #bbb;border-radius:2px;background:#f0f0f0"></div>
<div style="position:absolute;left:1034px;top:253px;width:108px;height:26px;background:#f0f0f0;border:1px solid #bbb;border-radius:2px;background:#f0f0f0"></div>
<div style="position:absolute;left:1150px;top:253px;width:34px;height:26px;background:#f0f0f0;border:1px solid #bbb;border-radius:2px;background:#f0f0f0"></div>
<svg style="position:absolute;left:853px;top:258px;" width="16" height="16" viewBox="0 0 16 16"><path d="M7 14.5H2.5V1.5H10.5L13.5 4.5V9" fill="none" stroke="#333" stroke-width="1.1" stroke-linejoin="round"/><path d="M10.5 1.5V4.5H13.5" fill="#fff" stroke="#333" stroke-width="1"/><path d="M12.3 9.6v6.4M9.1 12.8h6.4" stroke="#333" stroke-width="1.7"/></svg>
<div style="position:absolute;left:872px;top:261.11px;font:normal 10.5px/10.5px 'Liberation Sans', sans-serif;white-space:nowrap;color:#333;">New record</div>
<svg style="position:absolute;left:951px;top:258px;" width="16" height="16" viewBox="0 0 16 16"><path d="M8.5 14.5H1.5V1.5H13.5V9" fill="none" stroke="#333" stroke-width="1.1"/><path d="M1.5 4.5H13.5M1.5 7.5H8M1.5 10.5H8" stroke="#333" stroke-width="1"/><rect x="9.5" y="2.5" width="1" height="1" fill="#333"/><rect x="11.5" y="2.5" width="1" height="1" fill="#333"/><path d="M11.5 7.5v5" stroke="#333" stroke-width="1.4"/><path d="M8.8 11.3h5.4L11.5 14.8z" fill="#333"/></svg>
<div style="position:absolute;left:971px;top:261.11px;font:normal 10.5px/10.5px 'Liberation Sans', sans-serif;white-space:nowrap;color:#333;">Download</div>
<svg style="position:absolute;left:1043px;top:258px;" width="16" height="16" viewBox="0 0 16 16"><rect x="1.5" y="2.5" width="13.5" height="10.5" fill="none" stroke="#333" stroke-width="1.1"/><rect x="3.5" y="5" width="1.2" height="1.2" fill="#333"/><rect x="3.5" y="9" width="1.2" height="1.2" fill="#333"/><rect x="6.5" y="4.5" width="6.5" height="2.3" rx=".5" fill="none" stroke="#333" stroke-width="1"/><rect x="6.5" y="8.5" width="6.5" height="2.3" rx=".5" fill="none" stroke="#333" stroke-width="1"/></svg>
<div style="position:absolute;left:1062px;top:261.11px;font:normal 10.5px/10.5px 'Liberation Sans', sans-serif;white-space:nowrap;color:#333;">Show Columns</div>
<svg style="position:absolute;left:1162px;top:262px;" width="10" height="8" viewBox="0 0 10 8"><path d="M1 6L5 2l4 4" fill="none" stroke="#333" stroke-width="1.2"/></svg>
<div style="position:absolute;left:567px;top:288px;width:624px;height:34px;background:#ededed"></div>
<div style="position:absolute;left:567px;top:322px;width:624px;height:1px;background:#cfcfcf"></div>
<div style="position:absolute;left:599px;top:298.84px;font:bold 12px/12px 'Liberation Sans', sans-serif;white-space:nowrap;color:#222;">Pagetitle</div>
<div style="position:absolute;left:1039px;top:298.84px;font:normal 12px/12px 'Liberation Sans', sans-serif;white-space:nowrap;color:#222;font-style:italic">[Localization]</div>
<div style="position:absolute;left:1126px;top:298.84px;font:bold 12px/12px 'Liberation Sans', sans-serif;white-space:nowrap;color:#111;">Localize to</div>
<div style="position:absolute;left:567px;top:323px;width:624px;height:48px;background:#f2f2f2"></div>
<div style="position:absolute;left:567px;top:371px;width:624px;height:1px;background:#d5d5d5"></div>
<svg style="position:absolute;left:576px;top:339px;" width="16" height="16" viewBox="0 0 16 16"><path d="M1.5 15.5V.5H8.5L12.5 4.5V5.5" fill="#f2f2f2" stroke="#999"/><path d="M8.5 .5V4.5H12.5" fill="#fff" stroke="#999"/><rect x="4.5" y="5.5" width="10" height="10" fill="#fff" stroke="#555"/><path d="M7.3 13.2V11.2c0-.7.4-1.1 1.1-1.1H10.5V8.3l2.5 2.4-2.5 2.4V11.3H8.6V13.2z" fill="#111"/></svg>
<div style="position:absolute;left:599px;top:340.84px;font:normal 12px/12px 'Liberation Sans', sans-serif;white-space:nowrap;color:#333;">Home</div>
<div style="position:absolute;left:713px;top:331px;width:146px;height:32px;background:#efefef;border:1px solid #bbb;border-radius:2px"></div>
<div style="position:absolute;left:742px;top:331px;width:1px;height:32px;background:#bbb"></div>
<div style="position:absolute;left:771px;top:331px;width:1px;height:32px;background:#bbb"></div>
<div style="position:absolute;left:800px;top:331px;width:1px;height:32px;background:#bbb"></div>
<div style="position:absolute;left:829px;top:331px;width:1px;height:32px;background:#bbb"></div>
<svg style="position:absolute;left:720px;top:339px;" width="16" height="16" viewBox="0 0 16 16"><path d="M5.5 14.5H2.5V1.5H10.5L13.5 4.5V6.5" fill="none" stroke="#333" stroke-width="1.1" stroke-linejoin="round"/><path d="M10.5 1.5V4.5H13.5" fill="#fff" stroke="#333" stroke-width="1"/><path d="M6.3 15.8l.9-2.9 6.6-6.6 2 2-6.6 6.6z" fill="#333"/><path d="M12.2 14.5h1.3" stroke="#333" stroke-width="1.1"/></svg>
<svg style="position:absolute;left:749px;top:339px;" width="16" height="16" viewBox="0 0 16 16"><rect x="0" y="3" width="16" height="10" rx="5" fill="#333"/><circle cx="11" cy="8" r="2.9" fill="#fff"/></svg>
<div style="position:absolute;left:772px;top:332px;width:28px;height:30px;background:#f2f2f2"></div>
<div style="position:absolute;left:771px;top:331px;width:29px;height:1px;background:#ddd"></div>
<div style="position:absolute;left:771px;top:362px;width:29px;height:1px;background:#ddd"></div>
<svg style="position:absolute;left:810px;top:343px;" width="10" height="8" viewBox="0 0 10 8"><path d="M0 .5h10L5 7.5z" fill="#333"/></svg>
<svg style="position:absolute;left:836px;top:339px;" width="16" height="16" viewBox="0 0 16 16"><path d="M2.2 3.6h11.6" stroke="#333" stroke-width="1.3"/><path d="M5.8 3.2V1.6h4.4v1.6" fill="none" stroke="#333" stroke-width="1.1"/><path d="M3.9 4.2v10.3h8.2V4.2" fill="none" stroke="#333" stroke-width="1.2"/><path d="M6.6 5.8v7.2M9.4 5.8v7.2" stroke="#333" stroke-width="1.1"/></svg>
<div style="position:absolute;left:862px;top:331px;width:30px;height:32px;background:#efefef;border:1px solid #bbb;border-radius:2px"></div>
<svg style="position:absolute;left:875px;top:340px;" width="4" height="14" viewBox="0 0 4 14"><rect x="1" y="1" width="2" height="2" fill="#333"/><rect x="1" y="6.5" width="2" height="2" fill="#333"/><rect x="1" y="12" width="2" height="2" fill="#333"/></svg>
<div style="position:absolute;left:906px;top:331px;width:59px;height:32px;background:#f2f2f2;border:1px solid #d8d8d8;border-radius:2px 0 0 2px"></div>
<div style="position:absolute;left:935px;top:331px;width:1px;height:32px;background:#d8d8d8"></div>
<div style="position:absolute;left:964px;top:331px;width:59px;height:32px;background:#efefef;border:1px solid #bbb;border-radius:0 2px 2px 0"></div>
<div style="position:absolute;left:993px;top:331px;width:1px;height:32px;background:#bbb"></div>
<svg style="position:absolute;left:971px;top:339px;" width="16" height="16" viewBox="0 0 16 16"><rect x="3.5" y="2.5" width="9" height="12" fill="none" stroke="#333" stroke-width="1.1"/><rect x="6" y="1" width="4" height="2.5" fill="#333"/></svg>
<svg style="position:absolute;left:1000px;top:339px;" width="16" height="16" viewBox="0 0 16 16"><circle cx="4.6" cy="2.9" r="2.1" fill="none" stroke="#333" stroke-width="1.3"/><circle cx="4.6" cy="13.1" r="2.1" fill="none" stroke="#333" stroke-width="1.3"/><path d="M5.3 4.9L6.6 8M5.3 11.1L6.6 8" fill="none" stroke="#333" stroke-width="1.3"/><path d="M6.2 7.3L14.3 2.9 15.4 4.5 7.6 9z M6.2 8.7L14.3 13.1 15.4 11.5 7.6 7z" fill="#333"/><circle cx="7" cy="8" r=".8" fill="#eee"/></svg>
<svg style="position:absolute;left:1039px;top:339px;" width="16" height="16" viewBox="0 0 16 16"><rect x="0" y="0" width="16" height="16" fill="#fff"/><rect x="0" y="0.0" width="16" height="1.3" fill="#c4384a"/><rect x="0" y="2.5" width="16" height="1.3" fill="#c4384a"/><rect x="0" y="5.0" width="16" height="1.3" fill="#c4384a"/><rect x="0" y="7.5" width="16" height="1.3" fill="#c4384a"/><rect x="0" y="10.0" width="16" height="1.3" fill="#c4384a"/><rect x="0" y="12.5" width="16" height="1.3" fill="#c4384a"/><rect x="0" y="15.0" width="16" height="1.3" fill="#c4384a"/><rect x="0" y="0" width="12" height="8.6" fill="#253a73"/></svg>
<div style="position:absolute;left:1058px;top:340.84px;font:normal 12px/12px 'Liberation Sans', sans-serif;white-space:nowrap;color:#222;">English</div>
<div style="position:absolute;left:1126px;top:331px;width:59px;height:32px;background:#efefef;border:1px solid #bbb;border-radius:2px"></div>
<div style="position:absolute;left:1155px;top:331px;width:1px;height:32px;background:#bbb"></div>
<svg style="position:absolute;left:1133px;top:339px;" width="16" height="16" viewBox="0 0 16 16"><rect x="0" y="0" width="16" height="16" fill="#c8102e"/><rect x="4.5" y="0" width="2.5" height="16" fill="#fff"/><rect x="0" y="6.8" width="16" height="2.4" fill="#fff"/></svg>
<svg style="position:absolute;left:1162px;top:339px;" width="16" height="16" viewBox="0 0 16 16"><rect x="0" y="0" width="16" height="5.4" fill="#000"/><rect x="0" y="5.4" width="16" height="5.3" fill="#dd0000"/><rect x="0" y="10.7" width="16" height="5.3" fill="#ffce00"/></svg>
<div style="position:absolute;left:567px;top:372px;width:624px;height:48px;background:#fafafa"></div>
<div style="position:absolute;left:567px;top:420px;width:624px;height:1px;background:#d5d5d5"></div>
<svg style="position:absolute;left:576px;top:388px;" width="16" height="16" viewBox="0 0 16 16"><rect x="0" y="7" width="14" height="2" fill="#555"/><path d="M4.5 5L7 2.3 9.5 5z M4.5 11L7 13.7 9.5 11z" fill="#999"/></svg>
<div style="position:absolute;left:599px;top:389.84px;font:normal 12px/12px 'Liberation Sans', sans-serif;white-space:nowrap;color:#333;">Spacer</div>
<div style="position:absolute;left:713px;top:380px;width:146px;height:32px;background:#efefef;border:1px solid #bbb;border-radius:2px"></div>
<div style="position:absolute;left:742px;top:380px;width:1px;height:32px;background:#bbb"></div>
<div style="position:absolute;left:771px;top:380px;width:1px;height:32px;background:#bbb"></div>
<div style="position:absolute;left:800px;top:380px;width:1px;height:32px;background:#bbb"></div>
<div style="position:absolute;left:829px;top:380px;width:1px;height:32px;background:#bbb"></div>
<svg style="position:absolute;left:720px;top:388px;" width="16" height="16" viewBox="0 0 16 16"><path d="M5.5 14.5H2.5V1.5H10.5L13.5 4.5V6.5" fill="none" stroke="#333" stroke-width="1.1" stroke-linejoin="round"/><path d="M10.5 1.5V4.5H13.5" fill="#fff" stroke="#333" stroke-width="1"/><path d="M6.3 15.8l.9-2.9 6.6-6.6 2 2-6.6 6.6z" fill="#333"/><path d="M12.2 14.5h1.3" stroke="#333" stroke-width="1.1"/></svg>
<svg style="position:absolute;left:749px;top:388px;" width="16" height="16" viewBox="0 0 16 16"><rect x="0" y="3" width="16" height="10" rx="5" fill="#333"/><circle cx="11" cy="8" r="2.9" fill="#fff"/></svg>
<svg style="position:absolute;left:781px;top:392px;" width="10" height="8" viewBox="0 0 10 8"><path d="M0 7.5L5 .5l5 7z" fill="#333"/></svg>
<svg style="position:absolute;left:810px;top:392px;" width="10" height="8" viewBox="0 0 10 8"><path d="M0 .5h10L5 7.5z" fill="#333"/></svg>
<svg style="position:absolute;left:836px;top:388px;" width="16" height="16" viewBox="0 0 16 16"><path d="M2.2 3.6h11.6" stroke="#333" stroke-width="1.3"/><path d="M5.8 3.2V1.6h4.4v1.6" fill="none" stroke="#333" stroke-width="1.1"/><path d="M3.9 4.2v10.3h8.2V4.2" fill="none" stroke="#333" stroke-width="1.2"/><path d="M6.6 5.8v7.2M9.4 5.8v7.2" stroke="#333" stroke-width="1.1"/></svg>
<div style="position:absolute;left:862px;top:380px;width:30px;height:32px;background:#efefef;border:1px solid #bbb;border-radius:2px"></div>
<svg style="position:absolute;left:875px;top:389px;" width="4" height="14" viewBox="0 0 4 14"><rect x="1" y="1" width="2" height="2" fill="#333"/><rect x="1" y="6.5" width="2" height="2" fill="#333"/><rect x="1" y="12" width="2" height="2" fill="#333"/></svg>
<div style="position:absolute;left:906px;top:380px;width:59px;height:32px;background:#f2f2f2;border:1px solid #d8d8d8;border-radius:2px 0 0 2px"></div>
<div style="position:absolute;left:935px;top:380px;width:1px;height:32px;background:#d8d8d8"></div>
<div style="position:absolute;left:964px;top:380px;width:59px;height:32px;background:#efefef;border:1px solid #bbb;border-radius:0 2px 2px 0"></div>
<div style="position:absolute;left:993px;top:380px;width:1px;height:32px;background:#bbb"></div>
<svg style="position:absolute;left:971px;top:388px;" width="16" height="16" viewBox="0 0 16 16"><rect x="3.5" y="2.5" width="9" height="12" fill="none" stroke="#333" stroke-width="1.1"/><rect x="6" y="1" width="4" height="2.5" fill="#333"/></svg>
<svg style="position:absolute;left:1000px;top:388px;" width="16" height="16" viewBox="0 0 16 16"><circle cx="4.6" cy="2.9" r="2.1" fill="none" stroke="#333" stroke-width="1.3"/><circle cx="4.6" cy="13.1" r="2.1" fill="none" stroke="#333" stroke-width="1.3"/><path d="M5.3 4.9L6.6 8M5.3 11.1L6.6 8" fill="none" stroke="#333" stroke-width="1.3"/><path d="M6.2 7.3L14.3 2.9 15.4 4.5 7.6 9z M6.2 8.7L14.3 13.1 15.4 11.5 7.6 7z" fill="#333"/><circle cx="7" cy="8" r=".8" fill="#eee"/></svg>
<svg style="position:absolute;left:1039px;top:388px;" width="16" height="16" viewBox="0 0 16 16"><rect x="0" y="0" width="16" height="16" fill="#fff"/><rect x="0" y="0.0" width="16" height="1.3" fill="#c4384a"/><rect x="0" y="2.5" width="16" height="1.3" fill="#c4384a"/><rect x="0" y="5.0" width="16" height="1.3" fill="#c4384a"/><rect x="0" y="7.5" width="16" height="1.3" fill="#c4384a"/><rect x="0" y="10.0" width="16" height="1.3" fill="#c4384a"/><rect x="0" y="12.5" width="16" height="1.3" fill="#c4384a"/><rect x="0" y="15.0" width="16" height="1.3" fill="#c4384a"/><rect x="0" y="0" width="12" height="8.6" fill="#253a73"/></svg>
<div style="position:absolute;left:1058px;top:389.84px;font:normal 12px/12px 'Liberation Sans', sans-serif;white-space:nowrap;color:#222;">English</div>
<div style="position:absolute;left:1126px;top:380px;width:59px;height:32px;background:#efefef;border:1px solid #bbb;border-radius:2px"></div>
<div style="position:absolute;left:1155px;top:380px;width:1px;height:32px;background:#bbb"></div>
<svg style="position:absolute;left:1133px;top:388px;" width="16" height="16" viewBox="0 0 16 16"><rect x="0" y="0" width="16" height="16" fill="#c8102e"/><rect x="4.5" y="0" width="2.5" height="16" fill="#fff"/><rect x="0" y="6.8" width="16" height="2.4" fill="#fff"/></svg>
<svg style="position:absolute;left:1162px;top:388px;" width="16" height="16" viewBox="0 0 16 16"><rect x="0" y="0" width="16" height="5.4" fill="#000"/><rect x="0" y="5.4" width="16" height="5.3" fill="#dd0000"/><rect x="0" y="10.7" width="16" height="5.3" fill="#ffce00"/></svg>
<div style="position:absolute;left:567px;top:421px;width:624px;height:48px;background:#f2f2f2"></div>
<div style="position:absolute;left:567px;top:469px;width:624px;height:1px;background:#d5d5d5"></div>
<svg style="position:absolute;left:576px;top:437px;" width="16" height="16" viewBox="0 0 16 16"><path d="M1.5 .5H8.5L12.5 4.5V15.5H1.5Z" fill="#fff" stroke="#888"/><path d="M3 2H8V5H11V14H3z" fill="#efefef"/><path d="M8.5 .5V4.5H12.5" fill="#fff" stroke="#888"/><path d="M9 5H12V10z" fill="#c4c4c4"/></svg>
<div style="position:absolute;left:599px;top:438.84px;font:normal 12px/12px 'Liberation Sans', sans-serif;white-space:nowrap;color:#333;">Features</div>
<div style="position:absolute;left:713px;top:429px;width:146px;height:32px;background:#efefef;border:1px solid #bbb;border-radius:2px"></div>
<div style="position:absolute;left:742px;top:429px;width:1px;height:32px;background:#bbb"></div>
<div style="position:absolute;left:771px;top:429px;width:1px;height:32px;background:#bbb"></div>
<div style="position:absolute;left:800px;top:429px;width:1px;height:32px;background:#bbb"></div>
<div style="position:absolute;left:829px;top:429px;width:1px;height:32px;background:#bbb"></div>
<svg style="position:absolute;left:720px;top:437px;" width="16" height="16" viewBox="0 0 16 16"><path d="M5.5 14.5H2.5V1.5H10.5L13.5 4.5V6.5" fill="none" stroke="#333" stroke-width="1.1" stroke-linejoin="round"/><path d="M10.5 1.5V4.5H13.5" fill="#fff" stroke="#333" stroke-width="1"/><path d="M6.3 15.8l.9-2.9 6.6-6.6 2 2-6.6 6.6z" fill="#333"/><path d="M12.2 14.5h1.3" stroke="#333" stroke-width="1.1"/></svg>
<svg style="position:absolute;left:749px;top:437px;" width="16" height="16" viewBox="0 0 16 16"><rect x="0" y="3" width="16" height="10" rx="5" fill="#333"/><circle cx="11" cy="8" r="2.9" fill="#fff"/></svg>
<svg style="position:absolute;left:781px;top:441px;" width="10" height="8" viewBox="0 0 10 8"><path d="M0 7.5L5 .5l5 7z" fill="#333"/></svg>
<svg style="position:absolute;left:810px;top:441px;" width="10" height="8" viewBox="0 0 10 8"><path d="M0 .5h10L5 7.5z" fill="#333"/></svg>
<svg style="position:absolute;left:836px;top:437px;" width="16" height="16" viewBox="0 0 16 16"><path d="M2.2 3.6h11.6" stroke="#333" stroke-width="1.3"/><path d="M5.8 3.2V1.6h4.4v1.6" fill="none" stroke="#333" stroke-width="1.1"/><path d="M3.9 4.2v10.3h8.2V4.2" fill="none" stroke="#333" stroke-width="1.2"/><path d="M6.6 5.8v7.2M9.4 5.8v7.2" stroke="#333" stroke-width="1.1"/></svg>
<div style="position:absolute;left:862px;top:429px;width:30px;height:32px;background:#efefef;border:1px solid #bbb;border-radius:2px"></div>
<svg style="position:absolute;left:875px;top:438px;" width="4" height="14" viewBox="0 0 4 14"><rect x="1" y="1" width="2" height="2" fill="#333"/><rect x="1" y="6.5" width="2" height="2" fill="#333"/><rect x="1" y="12" width="2" height="2" fill="#333"/></svg>
<div style="position:absolute;left:906px;top:429px;width:59px;height:32px;background:#f2f2f2;border:1px solid #d8d8d8;border-radius:2px 0 0 2px"></div>
<div style="position:absolute;left:935px;top:429px;width:1px;height:32px;background:#d8d8d8"></div>
<div style="position:absolute;left:964px;top:429px;width:59px;height:32px;background:#efefef;border:1px solid #bbb;border-radius:0 2px 2px 0"></div>
<div style="position:absolute;left:993px;top:429px;width:1px;height:32px;background:#bbb"></div>
<svg style="position:absolute;left:971px;top:437px;" width="16" height="16" viewBox="0 0 16 16"><rect x="3.5" y="2.5" width="9" height="12" fill="none" stroke="#333" stroke-width="1.1"/><rect x="6" y="1" width="4" height="2.5" fill="#333"/></svg>
<svg style="position:absolute;left:1000px;top:437px;" width="16" height="16" viewBox="0 0 16 16"><circle cx="4.6" cy="2.9" r="2.1" fill="none" stroke="#333" stroke-width="1.3"/><circle cx="4.6" cy="13.1" r="2.1" fill="none" stroke="#333" stroke-width="1.3"/><path d="M5.3 4.9L6.6 8M5.3 11.1L6.6 8" fill="none" stroke="#333" stroke-width="1.3"/><path d="M6.2 7.3L14.3 2.9 15.4 4.5 7.6 9z M6.2 8.7L14.3 13.1 15.4 11.5 7.6 7z" fill="#333"/><circle cx="7" cy="8" r=".8" fill="#eee"/></svg>
<svg style="position:absolute;left:1039px;top:437px;" width="16" height="16" viewBox="0 0 16 16"><rect x="0" y="0" width="16" height="16" fill="#fff"/><rect x="0" y="0.0" width="16" height="1.3" fill="#c4384a"/><rect x="0" y="2.5" width="16" height="1.3" fill="#c4384a"/><rect x="0" y="5.0" width="16" height="1.3" fill="#c4384a"/><rect x="0" y="7.5" width="16" height="1.3" fill="#c4384a"/><rect x="0" y="10.0" width="16" height="1.3" fill="#c4384a"/><rect x="0" y="12.5" width="16" height="1.3" fill="#c4384a"/><rect x="0" y="15.0" width="16" height="1.3" fill="#c4384a"/><rect x="0" y="0" width="12" height="8.6" fill="#253a73"/></svg>
<div style="position:absolute;left:1058px;top:438.84px;font:normal 12px/12px 'Liberation Sans', sans-serif;white-space:nowrap;color:#222;">English</div>
<div style="position:absolute;left:1126px;top:429px;width:59px;height:32px;background:#efefef;border:1px solid #bbb;border-radius:2px"></div>
<div style="position:absolute;left:1155px;top:429px;width:1px;height:32px;background:#bbb"></div>
<svg style="position:absolute;left:1133px;top:437px;" width="16" height="16" viewBox="0 0 16 16"><rect x="0" y="0" width="16" height="16" fill="#c8102e"/><rect x="4.5" y="0" width="2.5" height="16" fill="#fff"/><rect x="0" y="6.8" width="16" height="2.4" fill="#fff"/></svg>
<svg style="position:absolute;left:1162px;top:437px;" width="16" height="16" viewBox="0 0 16 16"><rect x="0" y="0" width="16" height="5.4" fill="#000"/><rect x="0" y="5.4" width="16" height="5.3" fill="#dd0000"/><rect x="0" y="10.7" width="16" height="5.3" fill="#ffce00"/></svg>
<div style="position:absolute;left:567px;top:470px;width:624px;height:48px;background:#fafafa"></div>
<div style="position:absolute;left:567px;top:518px;width:624px;height:1px;background:#d5d5d5"></div>
<svg style="position:absolute;left:576px;top:486px;" width="16" height="16" viewBox="0 0 16 16"><path d="M1.5 .5H8.5L12.5 4.5V15.5H1.5Z" fill="#fff" stroke="#888"/><path d="M3 2H8V5H11V14H3z" fill="#efefef"/><path d="M8.5 .5V4.5H12.5" fill="#fff" stroke="#888"/><path d="M9 5H12V10z" fill="#c4c4c4"/></svg>
<div style="position:absolute;left:599px;top:487.84px;font:normal 12px/12px 'Liberation Sans', sans-serif;white-space:nowrap;color:#333;">Customize</div>
<div style="position:absolute;left:713px;top:478px;width:146px;height:32px;background:#efefef;border:1px solid #bbb;border-radius:2px"></div>
<div style="position:absolute;left:742px;top:478px;width:1px;height:32px;background:#bbb"></div>
<div style="position:absolute;left:771px;top:478px;width:1px;height:32px;background:#bbb"></div>
<div style="position:absolute;left:800px;top:478px;width:1px;height:32px;background:#bbb"></div>
<div style="position:absolute;left:829px;top:478px;width:1px;height:32px;background:#bbb"></div>
<svg style="position:absolute;left:720px;top:486px;" width="16" height="16" viewBox="0 0 16 16"><path d="M5.5 14.5H2.5V1.5H10.5L13.5 4.5V6.5" fill="none" stroke="#333" stroke-width="1.1" stroke-linejoin="round"/><path d="M10.5 1.5V4.5H13.5" fill="#fff" stroke="#333" stroke-width="1"/><path d="M6.3 15.8l.9-2.9 6.6-6.6 2 2-6.6 6.6z" fill="#333"/><path d="M12.2 14.5h1.3" stroke="#333" stroke-width="1.1"/></svg>
<svg style="position:absolute;left:749px;top:486px;" width="16" height="16" viewBox="0 0 16 16"><rect x="0" y="3" width="16" height="10" rx="5" fill="#333"/><circle cx="11" cy="8" r="2.9" fill="#fff"/></svg>
<svg style="position:absolute;left:781px;top:490px;" width="10" height="8" viewBox="0 0 10 8"><path d="M0 7.5L5 .5l5 7z" fill="#333"/></svg>
<svg style="position:absolute;left:810px;top:490px;" width="10" height="8" viewBox="0 0 10 8"><path d="M0 .5h10L5 7.5z" fill="#333"/></svg>
<svg style="position:absolute;left:836px;top:486px;" width="16" height="16" viewBox="0 0 16 16"><path d="M2.2 3.6h11.6" stroke="#333" stroke-width="1.3"/><path d="M5.8 3.2V1.6h4.4v1.6" fill="none" stroke="#333" stroke-width="1.1"/><path d="M3.9 4.2v10.3h8.2V4.2" fill="none" stroke="#333" stroke-width="1.2"/><path d="M6.6 5.8v7.2M9.4 5.8v7.2" stroke="#333" stroke-width="1.1"/></svg>
<div style="position:absolute;left:862px;top:478px;width:30px;height:32px;background:#efefef;border:1px solid #bbb;border-radius:2px"></div>
<svg style="position:absolute;left:875px;top:487px;" width="4" height="14" viewBox="0 0 4 14"><rect x="1" y="1" width="2" height="2" fill="#333"/><rect x="1" y="6.5" width="2" height="2" fill="#333"/><rect x="1" y="12" width="2" height="2" fill="#333"/></svg>
<div style="position:absolute;left:906px;top:478px;width:59px;height:32px;background:#f2f2f2;border:1px solid #d8d8d8;border-radius:2px 0 0 2px"></div>
<div style="position:absolute;left:935px;top:478px;width:1px;height:32px;background:#d8d8d8"></div>
<div style="position:absolute;left:964px;top:478px;width:59px;height:32px;background:#efefef;border:1px solid #bbb;border-radius:0 2px 2px 0"></div>
<div style="position:absolute;left:993px;top:478px;width:1px;height:32px;background:#bbb"></div>
<svg style="position:absolute;left:971px;top:486px;" width="16" height="16" viewBox="0 0 16 16"><rect x="3.5" y="2.5" width="9" height="12" fill="none" stroke="#333" stroke-width="1.1"/><rect x="6" y="1" width="4" height="2.5" fill="#333"/></svg>
<svg style="position:absolute;left:1000px;top:486px;" width="16" height="16" viewBox="0 0 16 16"><circle cx="4.6" cy="2.9" r="2.1" fill="none" stroke="#333" stroke-width="1.3"/><circle cx="4.6" cy="13.1" r="2.1" fill="none" stroke="#333" stroke-width="1.3"/><path d="M5.3 4.9L6.6 8M5.3 11.1L6.6 8" fill="none" stroke="#333" stroke-width="1.3"/><path d="M6.2 7.3L14.3 2.9 15.4 4.5 7.6 9z M6.2 8.7L14.3 13.1 15.4 11.5 7.6 7z" fill="#333"/><circle cx="7" cy="8" r=".8" fill="#eee"/></svg>
<svg style="position:absolute;left:1039px;top:486px;" width="16" height="16" viewBox="0 0 16 16"><rect x="0" y="0" width="16" height="16" fill="#fff"/><rect x="0" y="0.0" width="16" height="1.3" fill="#c4384a"/><rect x="0" y="2.5" width="16" height="1.3" fill="#c4384a"/><rect x="0" y="5.0" width="16" height="1.3" fill="#c4384a"/><rect x="0" y="7.5" width="16" height="1.3" fill="#c4384a"/><rect x="0" y="10.0" width="16" height="1.3" fill="#c4384a"/><rect x="0" y="12.5" width="16" height="1.3" fill="#c4384a"/><rect x="0" y="15.0" width="16" height="1.3" fill="#c4384a"/><rect x="0" y="0" width="12" height="8.6" fill="#253a73"/></svg>
<div style="position:absolute;left:1058px;top:487.84px;font:normal 12px/12px 'Liberation Sans', sans-serif;white-space:nowrap;color:#222;">English</div>
<div style="position:absolute;left:1126px;top:478px;width:59px;height:32px;background:#efefef;border:1px solid #bbb;border-radius:2px"></div>
<div style="position:absolute;left:1155px;top:478px;width:1px;height:32px;background:#bbb"></div>
<svg style="position:absolute;left:1133px;top:486px;" width="16" height="16" viewBox="0 0 16 16"><rect x="0" y="0" width="16" height="16" fill="#c8102e"/><rect x="4.5" y="0" width="2.5" height="16" fill="#fff"/><rect x="0" y="6.8" width="16" height="2.4" fill="#fff"/></svg>
<svg style="position:absolute;left:1162px;top:486px;" width="16" height="16" viewBox="0 0 16 16"><rect x="0" y="0" width="16" height="5.4" fill="#000"/><rect x="0" y="5.4" width="16" height="5.3" fill="#dd0000"/><rect x="0" y="10.7" width="16" height="5.3" fill="#ffce00"/></svg>
<div style="position:absolute;left:567px;top:519px;width:624px;height:48px;background:#f2f2f2"></div>
<div style="position:absolute;left:567px;top:567px;width:624px;height:1px;background:#d5d5d5"></div>
<svg style="position:absolute;left:576px;top:535px;" width="16" height="16" viewBox="0 0 16 16"><path d="M1.5 .5H8.5L12.5 4.5V15.5H1.5Z" fill="#fff" stroke="#888"/><path d="M3 2H8V5H11V14H3z" fill="#efefef"/><path d="M8.5 .5V4.5H12.5" fill="#fff" stroke="#888"/><path d="M9 5H12V10z" fill="#c4c4c4"/></svg>
<div style="position:absolute;left:599px;top:536.84px;font:normal 12px/12px 'Liberation Sans', sans-serif;white-space:nowrap;color:#333;">Pages</div>
<div style="position:absolute;left:713px;top:527px;width:146px;height:32px;background:#efefef;border:1px solid #bbb;border-radius:2px"></div>
<div style="position:absolute;left:742px;top:527px;width:1px;height:32px;background:#bbb"></div>
<div style="position:absolute;left:771px;top:527px;width:1px;height:32px;background:#bbb"></div>
<div style="position:absolute;left:800px;top:527px;width:1px;height:32px;background:#bbb"></div>
<div style="position:absolute;left:829px;top:527px;width:1px;height:32px;background:#bbb"></div>
<svg style="position:absolute;left:720px;top:535px;" width="16" height="16" viewBox="0 0 16 16"><path d="M5.5 14.5H2.5V1.5H10.5L13.5 4.5V6.5" fill="none" stroke="#333" stroke-width="1.1" stroke-linejoin="round"/><path d="M10.5 1.5V4.5H13.5" fill="#fff" stroke="#333" stroke-width="1"/><path d="M6.3 15.8l.9-2.9 6.6-6.6 2 2-6.6 6.6z" fill="#333"/><path d="M12.2 14.5h1.3" stroke="#333" stroke-width="1.1"/></svg>
<svg style="position:absolute;left:749px;top:535px;" width="16" height="16" viewBox="0 0 16 16"><rect x="0" y="3" width="16" height="10" rx="5" fill="#333"/><circle cx="11" cy="8" r="2.9" fill="#fff"/></svg>
<svg style="position:absolute;left:781px;top:539px;" width="10" height="8" viewBox="0 0 10 8"><path d="M0 7.5L5 .5l5 7z" fill="#333"/></svg>
<svg style="position:absolute;left:810px;top:539px;" width="10" height="8" viewBox="0 0 10 8"><path d="M0 .5h10L5 7.5z" fill="#333"/></svg>
<svg style="position:absolute;left:836px;top:535px;" width="16" height="16" viewBox="0 0 16 16"><path d="M2.2 3.6h11.6" stroke="#333" stroke-width="1.3"/><path d="M5.8 3.2V1.6h4.4v1.6" fill="none" stroke="#333" stroke-width="1.1"/><path d="M3.9 4.2v10.3h8.2V4.2" fill="none" stroke="#333" stroke-width="1.2"/><path d="M6.6 5.8v7.2M9.4 5.8v7.2" stroke="#333" stroke-width="1.1"/></svg>
<div style="position:absolute;left:862px;top:527px;width:30px;height:32px;background:#efefef;border:1px solid #bbb;border-radius:2px"></div>
<svg style="position:absolute;left:875px;top:536px;" width="4" height="14" viewBox="0 0 4 14"><rect x="1" y="1" width="2" height="2" fill="#333"/><rect x="1" y="6.5" width="2" height="2" fill="#333"/><rect x="1" y="12" width="2" height="2" fill="#333"/></svg>
<div style="position:absolute;left:906px;top:527px;width:59px;height:32px;background:#f2f2f2;border:1px solid #d8d8d8;border-radius:2px 0 0 2px"></div>
<div style="position:absolute;left:935px;top:527px;width:1px;height:32px;background:#d8d8d8"></div>
<div style="position:absolute;left:964px;top:527px;width:59px;height:32px;background:#efefef;border:1px solid #bbb;border-radius:0 2px 2px 0"></div>
<div style="position:absolute;left:993px;top:527px;width:1px;height:32px;background:#bbb"></div>
<svg style="position:absolute;left:971px;top:535px;" width="16" height="16" viewBox="0 0 16 16"><rect x="3.5" y="2.5" width="9" height="12" fill="none" stroke="#333" stroke-width="1.1"/><rect x="6" y="1" width="4" height="2.5" fill="#333"/></svg>
<svg style="position:absolute;left:1000px;top:535px;" width="16" height="16" viewBox="0 0 16 16"><circle cx="4.6" cy="2.9" r="2.1" fill="none" stroke="#333" stroke-width="1.3"/><circle cx="4.6" cy="13.1" r="2.1" fill="none" stroke="#333" stroke-width="1.3"/><path d="M5.3 4.9L6.6 8M5.3 11.1L6.6 8" fill="none" stroke="#333" stroke-width="1.3"/><path d="M6.2 7.3L14.3 2.9 15.4 4.5 7.6 9z M6.2 8.7L14.3 13.1 15.4 11.5 7.6 7z" fill="#333"/><circle cx="7" cy="8" r=".8" fill="#eee"/></svg>
<svg style="position:absolute;left:1039px;top:535px;" width="16" height="16" viewBox="0 0 16 16"><rect x="0" y="0" width="16" height="16" fill="#fff"/><rect x="0" y="0.0" width="16" height="1.3" fill="#c4384a"/><rect x="0" y="2.5" width="16" height="1.3" fill="#c4384a"/><rect x="0" y="5.0" width="16" height="1.3" fill="#c4384a"/><rect x="0" y="7.5" width="16" height="1.3" fill="#c4384a"/><rect x="0" y="10.0" width="16" height="1.3" fill="#c4384a"/><rect x="0" y="12.5" width="16" height="1.3" fill="#c4384a"/><rect x="0" y="15.0" width="16" height="1.3" fill="#c4384a"/><rect x="0" y="0" width="12" height="8.6" fill="#253a73"/></svg>
<div style="position:absolute;left:1058px;top:536.84px;font:normal 12px/12px 'Liberation Sans', sans-serif;white-space:nowrap;color:#222;">English</div>
<div style="position:absolute;left:1126px;top:527px;width:59px;height:32px;background:#efefef;border:1px solid #bbb;border-radius:2px"></div>
<div style="position:absolute;left:1155px;top:527px;width:1px;height:32px;background:#bbb"></div>
<svg style="position:absolute;left:1133px;top:535px;" width="16" height="16" viewBox="0 0 16 16"><rect x="0" y="0" width="16" height="16" fill="#c8102e"/><rect x="4.5" y="0" width="2.5" height="16" fill="#fff"/><rect x="0" y="6.8" width="16" height="2.4" fill="#fff"/></svg>
<svg style="position:absolute;left:1162px;top:535px;" width="16" height="16" viewBox="0 0 16 16"><rect x="0" y="0" width="16" height="5.4" fill="#000"/><rect x="0" y="5.4" width="16" height="5.3" fill="#dd0000"/><rect x="0" y="10.7" width="16" height="5.3" fill="#ffce00"/></svg>
<div style="position:absolute;left:567px;top:568px;width:624px;height:48px;background:#fafafa"></div>
<div style="position:absolute;left:567px;top:616px;width:624px;height:1px;background:#d5d5d5"></div>
<svg style="position:absolute;left:576px;top:584px;" width="16" height="16" viewBox="0 0 16 16"><path d="M1.5 .5H8.5L12.5 4.5V15.5H1.5Z" fill="#fff" stroke="#888"/><path d="M3 2H8V5H11V14H3z" fill="#efefef"/><path d="M8.5 .5V4.5H12.5" fill="#fff" stroke="#888"/><path d="M9 5H12V10z" fill="#c4c4c4"/></svg>
<div style="position:absolute;left:599px;top:585.84px;font:normal 12px/12px 'Liberation Sans', sans-serif;white-space:nowrap;color:#333;">Content Examples</div>
<div style="position:absolute;left:713px;top:576px;width:146px;height:32px;background:#efefef;border:1px solid #bbb;border-radius:2px"></div>
<div style="position:absolute;left:742px;top:576px;width:1px;height:32px;background:#bbb"></div>
<div style="position:absolute;left:771px;top:576px;width:1px;height:32px;background:#bbb"></div>
<div style="position:absolute;left:800px;top:576px;width:1px;height:32px;background:#bbb"></div>
<div style="position:absolute;left:829px;top:576px;width:1px;height:32px;background:#bbb"></div>
<svg style="position:absolute;left:720px;top:584px;" width="16" height="16" viewBox="0 0 16 16"><path d="M5.5 14.5H2.5V1.5H10.5L13.5 4.5V6.5" fill="none" stroke="#333" stroke-width="1.1" stroke-linejoin="round"/><path d="M10.5 1.5V4.5H13.5" fill="#fff" stroke="#333" stroke-width="1"/><path d="M6.3 15.8l.9-2.9 6.6-6.6 2 2-6.6 6.6z" fill="#333"/><path d="M12.2 14.5h1.3" stroke="#333" stroke-width="1.1"/></svg>
<svg style="position:absolute;left:749px;top:584px;" width="16" height="16" viewBox="0 0 16 16"><rect x="0" y="3" width="16" height="10" rx="5" fill="#333"/><circle cx="11" cy="8" r="2.9" fill="#fff"/></svg>
<svg style="position:absolute;left:781px;top:588px;" width="10" height="8" viewBox="0 0 10 8"><path d="M0 7.5L5 .5l5 7z" fill="#333"/></svg>
<svg style="position:absolute;left:810px;top:588px;" width="10" height="8" viewBox="0 0 10 8"><path d="M0 .5h10L5 7.5z" fill="#333"/></svg>
<svg style="position:absolute;left:836px;top:584px;" width="16" height="16" viewBox="0 0 16 16"><path d="M2.2 3.6h11.6" stroke="#333" stroke-width="1.3"/><path d="M5.8 3.2V1.6h4.4v1.6" fill="none" stroke="#333" stroke-width="1.1"/><path d="M3.9 4.2v10.3h8.2V4.2" fill="none" stroke="#333" stroke-width="1.2"/><path d="M6.6 5.8v7.2M9.4 5.8v7.2" stroke="#333" stroke-width="1.1"/></svg>
<div style="position:absolute;left:862px;top:576px;width:30px;height:32px;background:#efefef;border:1px solid #bbb;border-radius:2px"></div>
<svg style="position:absolute;left:875px;top:585px;" width="4" height="14" viewBox="0 0 4 14"><rect x="1" y="1" width="2" height="2" fill="#333"/><rect x="1" y="6.5" width="2" height="2" fill="#333"/><rect x="1" y="12" width="2" height="2" fill="#333"/></svg>
<div style="position:absolute;left:906px;top:576px;width:59px;height:32px;background:#f2f2f2;border:1px solid #d8d8d8;border-radius:2px 0 0 2px"></div>
<div style="position:absolute;left:935px;top:576px;width:1px;height:32px;background:#d8d8d8"></div>
<div style="position:absolute;left:964px;top:576px;width:59px;height:32px;background:#efefef;border:1px solid #bbb;border-radius:0 2px 2px 0"></div>
<div style="position:absolute;left:993px;top:576px;width:1px;height:32px;background:#bbb"></div>
<svg style="position:absolute;left:971px;top:584px;" width="16" height="16" viewBox="0 0 16 16"><rect x="3.5" y="2.5" width="9" height="12" fill="none" stroke="#333" stroke-width="1.1"/><rect x="6" y="1" width="4" height="2.5" fill="#333"/></svg>
<svg style="position:absolute;left:1000px;top:584px;" width="16" height="16" viewBox="0 0 16 16"><circle cx="4.6" cy="2.9" r="2.1" fill="none" stroke="#333" stroke-width="1.3"/><circle cx="4.6" cy="13.1" r="2.1" fill="none" stroke="#333" stroke-width="1.3"/><path d="M5.3 4.9L6.6 8M5.3 11.1L6.6 8" fill="none" stroke="#333" stroke-width="1.3"/><path d="M6.2 7.3L14.3 2.9 15.4 4.5 7.6 9z M6.2 8.7L14.3 13.1 15.4 11.5 7.6 7z" fill="#333"/><circle cx="7" cy="8" r=".8" fill="#eee"/></svg>
<svg style="position:absolute;left:1039px;top:584px;" width="16" height="16" viewBox="0 0 16 16"><rect x="0" y="0" width="16" height="16" fill="#fff"/><rect x="0" y="0.0" width="16" height="1.3" fill="#c4384a"/><rect x="0" y="2.5" width="16" height="1.3" fill="#c4384a"/><rect x="0" y="5.0" width="16" height="1.3" fill="#c4384a"/><rect x="0" y="7.5" width="16" height="1.3" fill="#c4384a"/><rect x="0" y="10.0" width="16" height="1.3" fill="#c4384a"/><rect x="0" y="12.5" width="16" height="1.3" fill="#c4384a"/><rect x="0" y="15.0" width="16" height="1.3" fill="#c4384a"/><rect x="0" y="0" width="12" height="8.6" fill="#253a73"/></svg>
<div style="position:absolute;left:1058px;top:585.84px;font:normal 12px/12px 'Liberation Sans', sans-serif;white-space:nowrap;color:#222;">English</div>
<div style="position:absolute;left:1126px;top:576px;width:59px;height:32px;background:#efefef;border:1px solid #bbb;border-radius:2px"></div>
<div style="position:absolute;left:1155px;top:576px;width:1px;height:32px;background:#bbb"></div>
<svg style="position:absolute;left:1133px;top:584px;" width="16" height="16" viewBox="0 0 16 16"><rect x="0" y="0" width="16" height="16" fill="#c8102e"/><rect x="4.5" y="0" width="2.5" height="16" fill="#fff"/><rect x="0" y="6.8" width="16" height="2.4" fill="#fff"/></svg>
<svg style="position:absolute;left:1162px;top:584px;" width="16" height="16" viewBox="0 0 16 16"><rect x="0" y="0" width="16" height="5.4" fill="#000"/><rect x="0" y="5.4" width="16" height="5.3" fill="#dd0000"/><rect x="0" y="10.7" width="16" height="5.3" fill="#ffce00"/></svg>
<div style="position:absolute;left:567px;top:617px;width:624px;height:48px;background:#f2f2f2"></div>
<div style="position:absolute;left:567px;top:665px;width:624px;height:1px;background:#d5d5d5"></div>
<svg style="position:absolute;left:576px;top:633px;" width="16" height="16" viewBox="0 0 16 16"><path d="M1.5 .5H8.5L12.5 4.5V15.5H1.5Z" fill="#fff" stroke="#c8c8c8"/><path d="M3 2H8V5H11V14H3z" fill="#f5f5f5"/><path d="M8.5 .5V4.5H12.5" fill="#fff" stroke="#c8c8c8"/><path d="M9 5H12V10z" fill="#e0e0e0"/></svg>
<div style="position:absolute;left:599px;top:634.84px;font:normal 12px/12px 'Liberation Sans', sans-serif;white-space:nowrap;color:#333;">404</div>
<div style="position:absolute;left:713px;top:625px;width:146px;height:32px;background:#efefef;border:1px solid #bbb;border-radius:2px"></div>
<div style="position:absolute;left:742px;top:625px;width:1px;height:32px;background:#bbb"></div>
<div style="position:absolute;left:771px;top:625px;width:1px;height:32px;background:#bbb"></div>
<div style="position:absolute;left:800px;top:625px;width:1px;height:32px;background:#bbb"></div>
<div style="position:absolute;left:829px;top:625px;width:1px;height:32px;background:#bbb"></div>
<svg style="position:absolute;left:720px;top:633px;" width="16" height="16" viewBox="0 0 16 16"><path d="M5.5 14.5H2.5V1.5H10.5L13.5 4.5V6.5" fill="none" stroke="#333" stroke-width="1.1" stroke-linejoin="round"/><path d="M10.5 1.5V4.5H13.5" fill="#fff" stroke="#333" stroke-width="1"/><path d="M6.3 15.8l.9-2.9 6.6-6.6 2 2-6.6 6.6z" fill="#333"/><path d="M12.2 14.5h1.3" stroke="#333" stroke-width="1.1"/></svg>
<svg style="position:absolute;left:749px;top:633px;" width="16" height="16" viewBox="0 0 16 16"><rect x="0" y="3" width="16" height="10" rx="5" fill="#333"/><circle cx="11" cy="8" r="2.9" fill="#fff"/></svg>
<svg style="position:absolute;left:781px;top:637px;" width="10" height="8" viewBox="0 0 10 8"><path d="M0 7.5L5 .5l5 7z" fill="#333"/></svg>
<svg style="position:absolute;left:810px;top:637px;" width="10" height="8" viewBox="0 0 10 8"><path d="M0 .5h10L5 7.5z" fill="#333"/></svg>
<svg style="position:absolute;left:836px;top:633px;" width="16" height="16" viewBox="0 0 16 16"><path d="M2.2 3.6h11.6" stroke="#333" stroke-width="1.3"/><path d="M5.8 3.2V1.6h4.4v1.6" fill="none" stroke="#333" stroke-width="1.1"/><path d="M3.9 4.2v10.3h8.2V4.2" fill="none" stroke="#333" stroke-width="1.2"/><path d="M6.6 5.8v7.2M9.4 5.8v7.2" stroke="#333" stroke-width="1.1"/></svg>
<div style="position:absolute;left:862px;top:625px;width:30px;height:32px;background:#efefef;border:1px solid #bbb;border-radius:2px"></div>
<svg style="position:absolute;left:875px;top:634px;" width="4" height="14" viewBox="0 0 4 14"><rect x="1" y="1" width="2" height="2" fill="#333"/><rect x="1" y="6.5" width="2" height="2" fill="#333"/><rect x="1" y="12" width="2" height="2" fill="#333"/></svg>
<div style="position:absolute;left:906px;top:625px;width:59px;height:32px;background:#f2f2f2;border:1px solid #d8d8d8;border-radius:2px 0 0 2px"></div>
<div style="position:absolute;left:935px;top:625px;width:1px;height:32px;background:#d8d8d8"></div>
<div style="position:absolute;left:964px;top:625px;width:59px;height:32px;background:#efefef;border:1px solid #bbb;border-radius:0 2px 2px 0"></div>
<div style="position:absolute;left:993px;top:625px;width:1px;height:32px;background:#bbb"></div>
<svg style="position:absolute;left:971px;top:633px;" width="16" height="16" viewBox="0 0 16 16"><rect x="3.5" y="2.5" width="9" height="12" fill="none" stroke="#333" stroke-width="1.1"/><rect x="6" y="1" width="4" height="2.5" fill="#333"/></svg>
<svg style="position:absolute;left:1000px;top:633px;" width="16" height="16" viewBox="0 0 16 16"><circle cx="4.6" cy="2.9" r="2.1" fill="none" stroke="#333" stroke-width="1.3"/><circle cx="4.6" cy="13.1" r="2.1" fill="none" stroke="#333" stroke-width="1.3"/><path d="M5.3 4.9L6.6 8M5.3 11.1L6.6 8" fill="none" stroke="#333" stroke-width="1.3"/><path d="M6.2 7.3L14.3 2.9 15.4 4.5 7.6 9z M6.2 8.7L14.3 13.1 15.4 11.5 7.6 7z" fill="#333"/><circle cx="7" cy="8" r=".8" fill="#eee"/></svg>
<svg style="position:absolute;left:1039px;top:633px;" width="16" height="16" viewBox="0 0 16 16"><rect x="0" y="0" width="16" height="16" fill="#fff"/><rect x="0" y="0.0" width="16" height="1.3" fill="#c4384a"/><rect x="0" y="2.5" width="16" height="1.3" fill="#c4384a"/><rect x="0" y="5.0" width="16" height="1.3" fill="#c4384a"/><rect x="0" y="7.5" width="16" height="1.3" fill="#c4384a"/><rect x="0" y="10.0" width="16" height="1.3" fill="#c4384a"/><rect x="0" y="12.5" width="16" height="1.3" fill="#c4384a"/><rect x="0" y="15.0" width="16" height="1.3" fill="#c4384a"/><rect x="0" y="0" width="12" height="8.6" fill="#253a73"/></svg>
<div style="position:absolute;left:1058px;top:634.84px;font:normal 12px/12px 'Liberation Sans', sans-serif;white-space:nowrap;color:#222;">English</div>
<div style="position:absolute;left:1126px;top:625px;width:59px;height:32px;background:#efefef;border:1px solid #bbb;border-radius:2px"></div>
<div style="position:absolute;left:1155px;top:625px;width:1px;height:32px;background:#bbb"></div>
<svg style="position:absolute;left:1133px;top:633px;" width="16" height="16" viewBox="0 0 16 16"><rect x="0" y="0" width="16" height="16" fill="#c8102e"/><rect x="4.5" y="0" width="2.5" height="16" fill="#fff"/><rect x="0" y="6.8" width="16" height="2.4" fill="#fff"/></svg>
<svg style="position:absolute;left:1162px;top:633px;" width="16" height="16" viewBox="0 0 16 16"><rect x="0" y="0" width="16" height="5.4" fill="#000"/><rect x="0" y="5.4" width="16" height="5.3" fill="#dd0000"/><rect x="0" y="10.7" width="16" height="5.3" fill="#ffce00"/></svg>
<div style="position:absolute;left:567px;top:666px;width:624px;height:48px;background:#fafafa"></div>
<div style="position:absolute;left:567px;top:714px;width:624px;height:1px;background:#d5d5d5"></div>
<svg style="position:absolute;left:575px;top:682px;" width="16" height="16" viewBox="0 0 16 16"><path d="M0 2.5H7L8 4H16V6H0z" fill="#7d7d7d"/><rect x="0" y="6" width="16" height="8" fill="#a3a3a3"/></svg>
<div style="position:absolute;left:599px;top:683.84px;font:normal 12px/12px 'Liberation Sans', sans-serif;white-space:nowrap;color:#333;">Shared Content</div>
<div style="position:absolute;left:713px;top:674px;width:146px;height:32px;background:#efefef;border:1px solid #bbb;border-radius:2px"></div>
<div style="position:absolute;left:742px;top:674px;width:1px;height:32px;background:#bbb"></div>
<div style="position:absolute;left:771px;top:674px;width:1px;height:32px;background:#bbb"></div>
<div style="position:absolute;left:800px;top:674px;width:1px;height:32px;background:#bbb"></div>
<div style="position:absolute;left:829px;top:674px;width:1px;height:32px;background:#bbb"></div>
<svg style="position:absolute;left:720px;top:682px;" width="16" height="16" viewBox="0 0 16 16"><path d="M5.5 14.5H2.5V1.5H10.5L13.5 4.5V6.5" fill="none" stroke="#333" stroke-width="1.1" stroke-linejoin="round"/><path d="M10.5 1.5V4.5H13.5" fill="#fff" stroke="#333" stroke-width="1"/><path d="M6.3 15.8l.9-2.9 6.6-6.6 2 2-6.6 6.6z" fill="#333"/><path d="M12.2 14.5h1.3" stroke="#333" stroke-width="1.1"/></svg>
<svg style="position:absolute;left:749px;top:682px;" width="16" height="16" viewBox="0 0 16 16"><rect x="0" y="3" width="16" height="10" rx="5" fill="#333"/><circle cx="11" cy="8" r="2.9" fill="#fff"/></svg>
<svg style="position:absolute;left:781px;top:686px;" width="10" height="8" viewBox="0 0 10 8"><path d="M0 7.5L5 .5l5 7z" fill="#333"/></svg>
<svg style="position:absolute;left:810px;top:686px;" width="10" height="8" viewBox="0 0 10 8"><path d="M0 .5h10L5 7.5z" fill="#333"/></svg>
<svg style="position:absolute;left:836px;top:682px;" width="16" height="16" viewBox="0 0 16 16"><path d="M2.2 3.6h11.6" stroke="#333" stroke-width="1.3"/><path d="M5.8 3.2V1.6h4.4v1.6" fill="none" stroke="#333" stroke-width="1.1"/><path d="M3.9 4.2v10.3h8.2V4.2" fill="none" stroke="#333" stroke-width="1.2"/><path d="M6.6 5.8v7.2M9.4 5.8v7.2" stroke="#333" stroke-width="1.1"/></svg>
<div style="position:absolute;left:862px;top:674px;width:30px;height:32px;background:#efefef;border:1px solid #bbb;border-radius:2px"></div>
<svg style="position:absolute;left:875px;top:683px;" width="4" height="14" viewBox="0 0 4 14"><rect x="1" y="1" width="2" height="2" fill="#333"/><rect x="1" y="6.5" width="2" height="2" fill="#333"/><rect x="1" y="12" width="2" height="2" fill="#333"/></svg>
<div style="position:absolute;left:906px;top:674px;width:59px;height:32px;background:#f2f2f2;border:1px solid #d8d8d8;border-radius:2px 0 0 2px"></div>
<div style="position:absolute;left:935px;top:674px;width:1px;height:32px;background:#d8d8d8"></div>
<div style="position:absolute;left:964px;top:674px;width:59px;height:32px;background:#efefef;border:1px solid #bbb;border-radius:0 2px 2px 0"></div>
<div style="position:absolute;left:993px;top:674px;width:1px;height:32px;background:#bbb"></div>
<svg style="position:absolute;left:971px;top:682px;" width="16" height="16" viewBox="0 0 16 16"><rect x="3.5" y="2.5" width="9" height="12" fill="none" stroke="#333" stroke-width="1.1"/><rect x="6" y="1" width="4" height="2.5" fill="#333"/></svg>
<svg style="position:absolute;left:1000px;top:682px;" width="16" height="16" viewBox="0 0 16 16"><circle cx="4.6" cy="2.9" r="2.1" fill="none" stroke="#333" stroke-width="1.3"/><circle cx="4.6" cy="13.1" r="2.1" fill="none" stroke="#333" stroke-width="1.3"/><path d="M5.3 4.9L6.6 8M5.3 11.1L6.6 8" fill="none" stroke="#333" stroke-width="1.3"/><path d="M6.2 7.3L14.3 2.9 15.4 4.5 7.6 9z M6.2 8.7L14.3 13.1 15.4 11.5 7.6 7z" fill="#333"/><circle cx="7" cy="8" r=".8" fill="#eee"/></svg>
<svg style="position:absolute;left:1039px;top:682px;" width="16" height="16" viewBox="0 0 16 16"><rect x="0" y="0" width="16" height="16" fill="#fff"/><rect x="0" y="0.0" width="16" height="1.3" fill="#c4384a"/><rect x="0" y="2.5" width="16" height="1.3" fill="#c4384a"/><rect x="0" y="5.0" width="16" height="1.3" fill="#c4384a"/><rect x="0" y="7.5" width="16" height="1.3" fill="#c4384a"/><rect x="0" y="10.0" width="16" height="1.3" fill="#c4384a"/><rect x="0" y="12.5" width="16" height="1.3" fill="#c4384a"/><rect x="0" y="15.0" width="16" height="1.3" fill="#c4384a"/><rect x="0" y="0" width="12" height="8.6" fill="#253a73"/></svg>
<div style="position:absolute;left:1058px;top:683.84px;font:normal 12px/12px 'Liberation Sans', sans-serif;white-space:nowrap;color:#222;">English</div>
<div style="position:absolute;left:1126px;top:674px;width:59px;height:32px;background:#efefef;border:1px solid #bbb;border-radius:2px"></div>
<div style="position:absolute;left:1155px;top:674px;width:1px;height:32px;background:#bbb"></div>
<svg style="position:absolute;left:1133px;top:682px;" width="16" height="16" viewBox="0 0 16 16"><rect x="0" y="0" width="16" height="16" fill="#c8102e"/><rect x="4.5" y="0" width="2.5" height="16" fill="#fff"/><rect x="0" y="6.8" width="16" height="2.4" fill="#fff"/></svg>
<svg style="position:absolute;left:1162px;top:682px;" width="16" height="16" viewBox="0 0 16 16"><rect x="0" y="0" width="16" height="5.4" fill="#000"/><rect x="0" y="5.4" width="16" height="5.3" fill="#dd0000"/><rect x="0" y="10.7" width="16" height="5.3" fill="#ffce00"/></svg>
<div style="position:absolute;left:567px;top:715px;width:624px;height:48px;background:#f2f2f2"></div>
<div style="position:absolute;left:567px;top:763px;width:624px;height:1px;background:#d5d5d5"></div>
<svg style="position:absolute;left:575px;top:731px;" width="16" height="16" viewBox="0 0 16 16"><path d="M0 2.5H7L8 4H16V6H0z" fill="#7d7d7d"/><rect x="0" y="6" width="16" height="8" fill="#a3a3a3"/></svg>
<div style="position:absolute;left:599px;top:732.84px;font:normal 12px/12px 'Liberation Sans', sans-serif;white-space:nowrap;color:#333;">File Collections</div>
<div style="position:absolute;left:713px;top:723px;width:146px;height:32px;background:#efefef;border:1px solid #bbb;border-radius:2px"></div>
<div style="position:absolute;left:742px;top:723px;width:1px;height:32px;background:#bbb"></div>
<div style="position:absolute;left:771px;top:723px;width:1px;height:32px;background:#bbb"></div>
<div style="position:absolute;left:800px;top:723px;width:1px;height:32px;background:#bbb"></div>
<div style="position:absolute;left:829px;top:723px;width:1px;height:32px;background:#bbb"></div>
<svg style="position:absolute;left:720px;top:731px;" width="16" height="16" viewBox="0 0 16 16"><path d="M5.5 14.5H2.5V1.5H10.5L13.5 4.5V6.5" fill="none" stroke="#333" stroke-width="1.1" stroke-linejoin="round"/><path d="M10.5 1.5V4.5H13.5" fill="#fff" stroke="#333" stroke-width="1"/><path d="M6.3 15.8l.9-2.9 6.6-6.6 2 2-6.6 6.6z" fill="#333"/><path d="M12.2 14.5h1.3" stroke="#333" stroke-width="1.1"/></svg>
<svg style="position:absolute;left:749px;top:731px;" width="16" height="16" viewBox="0 0 16 16"><rect x="0" y="3" width="16" height="10" rx="5" fill="#333"/><circle cx="11" cy="8" r="2.9" fill="#fff"/></svg>
<svg style="position:absolute;left:781px;top:735px;" width="10" height="8" viewBox="0 0 10 8"><path d="M0 7.5L5 .5l5 7z" fill="#333"/></svg>
<svg style="position:absolute;left:810px;top:735px;" width="10" height="8" viewBox="0 0 10 8"><path d="M0 .5h10L5 7.5z" fill="#333"/></svg>
<svg style="position:absolute;left:836px;top:731px;" width="16" height="16" viewBox="0 0 16 16"><path d="M2.2 3.6h11.6" stroke="#333" stroke-width="1.3"/><path d="M5.8 3.2V1.6h4.4v1.6" fill="none" stroke="#333" stroke-width="1.1"/><path d="M3.9 4.2v10.3h8.2V4.2" fill="none" stroke="#333" stroke-width="1.2"/><path d="M6.6 5.8v7.2M9.4 5.8v7.2" stroke="#333" stroke-width="1.1"/></svg>
<div style="position:absolute;left:862px;top:723px;width:30px;height:32px;background:#efefef;border:1px solid #bbb;border-radius:2px"></div>
<svg style="position:absolute;left:875px;top:732px;" width="4" height="14" viewBox="0 0 4 14"><rect x="1" y="1" width="2" height="2" fill="#333"/><rect x="1" y="6.5" width="2" height="2" fill="#333"/><rect x="1" y="12" width="2" height="2" fill="#333"/></svg>
<div style="position:absolute;left:906px;top:723px;width:59px;height:32px;background:#f2f2f2;border:1px solid #d8d8d8;border-radius:2px 0 0 2px"></div>
<div style="position:absolute;left:935px;top:723px;width:1px;height:32px;background:#d8d8d8"></div>
<div style="position:absolute;left:964px;top:723px;width:59px;height:32px;background:#efefef;border:1px solid #bbb;border-radius:0 2px 2px 0"></div>
<div style="position:absolute;left:993px;top:723px;width:1px;height:32px;background:#bbb"></div>
<svg style="position:absolute;left:971px;top:731px;" width="16" height="16" viewBox="0 0 16 16"><rect x="3.5" y="2.5" width="9" height="12" fill="none" stroke="#333" stroke-width="1.1"/><rect x="6" y="1" width="4" height="2.5" fill="#333"/></svg>
<svg style="position:absolute;left:1000px;top:731px;" width="16" height="16" viewBox="0 0 16 16"><circle cx="4.6" cy="2.9" r="2.1" fill="none" stroke="#333" stroke-width="1.3"/><circle cx="4.6" cy="13.1" r="2.1" fill="none" stroke="#333" stroke-width="1.3"/><path d="M5.3 4.9L6.6 8M5.3 11.1L6.6 8" fill="none" stroke="#333" stroke-width="1.3"/><path d="M6.2 7.3L14.3 2.9 15.4 4.5 7.6 9z M6.2 8.7L14.3 13.1 15.4 11.5 7.6 7z" fill="#333"/><circle cx="7" cy="8" r=".8" fill="#eee"/></svg>
<svg style="position:absolute;left:1039px;top:731px;" width="16" height="16" viewBox="0 0 16 16"><rect x="0" y="0" width="16" height="16" fill="#fff"/><rect x="0" y="0.0" width="16" height="1.3" fill="#c4384a"/><rect x="0" y="2.5" width="16" height="1.3" fill="#c4384a"/><rect x="0" y="5.0" width="16" height="1.3" fill="#c4384a"/><rect x="0" y="7.5" width="16" height="1.3" fill="#c4384a"/><rect x="0" y="10.0" width="16" height="1.3" fill="#c4384a"/><rect x="0" y="12.5" width="16" height="1.3" fill="#c4384a"/><rect x="0" y="15.0" width="16" height="1.3" fill="#c4384a"/><rect x="0" y="0" width="12" height="8.6" fill="#253a73"/></svg>
<div style="position:absolute;left:1058px;top:732.84px;font:normal 12px/12px 'Liberation Sans', sans-serif;white-space:nowrap;color:#222;">English</div>
<div style="position:absolute;left:1126px;top:723px;width:59px;height:32px;background:#efefef;border:1px solid #bbb;border-radius:2px"></div>
<div style="position:absolute;left:1155px;top:723px;width:1px;height:32px;background:#bbb"></div>
<svg style="position:absolute;left:1133px;top:731px;" width="16" height="16" viewBox="0 0 16 16"><rect x="0" y="0" width="16" height="16" fill="#c8102e"/><rect x="4.5" y="0" width="2.5" height="16" fill="#fff"/><rect x="0" y="6.8" width="16" height="2.4" fill="#fff"/></svg>
<svg style="position:absolute;left:1162px;top:731px;" width="16" height="16" viewBox="0 0 16 16"><rect x="0" y="0" width="16" height="5.4" fill="#000"/><rect x="0" y="5.4" width="16" height="5.3" fill="#dd0000"/><rect x="0" y="10.7" width="16" height="5.3" fill="#ffce00"/></svg>
<div style="position:absolute;left:567px;top:764px;width:624px;height:48px;background:#fafafa"></div>
<div style="position:absolute;left:567px;top:812px;width:624px;height:1px;background:#d5d5d5"></div>
<svg style="position:absolute;left:575px;top:780px;" width="16" height="16" viewBox="0 0 16 16"><rect x="0" y="2" width="12.7" height="11.6" fill="#8a8a8a"/><ellipse cx="4.9" cy="3.6" rx="1.8" ry="3.4" fill="#f5b942" stroke="#555" stroke-width=".6"/><ellipse cx="8.9" cy="4.6" rx="1.7" ry="3.2" fill="#f5b942" stroke="#555" stroke-width=".6"/><path d="M1.8 9c.2-2 1.8-3 3.8-2.8 1.2.1 1.8.6 2.2 1.4L7 9z" fill="#a8d600"/><path d="M.6 13.6L2.2 8.3 15.7 6.2 12.7 13.6z" fill="#ababab"/></svg>
<div style="position:absolute;left:599px;top:781.84px;font:normal 12px/12px 'Liberation Sans', sans-serif;white-space:nowrap;color:#333;">Frontend User</div>
<div style="position:absolute;left:713px;top:772px;width:146px;height:32px;background:#efefef;border:1px solid #bbb;border-radius:2px"></div>
<div style="position:absolute;left:742px;top:772px;width:1px;height:32px;background:#bbb"></div>
<div style="position:absolute;left:771px;top:772px;width:1px;height:32px;background:#bbb"></div>
<div style="position:absolute;left:800px;top:772px;width:1px;height:32px;background:#bbb"></div>
<div style="position:absolute;left:829px;top:772px;width:1px;height:32px;background:#bbb"></div>
<svg style="position:absolute;left:720px;top:780px;" width="16" height="16" viewBox="0 0 16 16"><path d="M5.5 14.5H2.5V1.5H10.5L13.5 4.5V6.5" fill="none" stroke="#333" stroke-width="1.1" stroke-linejoin="round"/><path d="M10.5 1.5V4.5H13.5" fill="#fff" stroke="#333" stroke-width="1"/><path d="M6.3 15.8l.9-2.9 6.6-6.6 2 2-6.6 6.6z" fill="#333"/><path d="M12.2 14.5h1.3" stroke="#333" stroke-width="1.1"/></svg>
<svg style="position:absolute;left:749px;top:780px;" width="16" height="16" viewBox="0 0 16 16"><rect x="0" y="3" width="16" height="10" rx="5" fill="#333"/><circle cx="11" cy="8" r="2.9" fill="#fff"/></svg>
<svg style="position:absolute;left:781px;top:784px;" width="10" height="8" viewBox="0 0 10 8"><path d="M0 7.5L5 .5l5 7z" fill="#333"/></svg>
<div style="position:absolute;left:801px;top:773px;width:28px;height:30px;background:#fafafa"></div>
<div style="position:absolute;left:800px;top:772px;width:29px;height:1px;background:#ddd"></div>
<div style="position:absolute;left:800px;top:803px;width:29px;height:1px;background:#ddd"></div>
<svg style="position:absolute;left:836px;top:780px;" width="16" height="16" viewBox="0 0 16 16"><path d="M2.2 3.6h11.6" stroke="#333" stroke-width="1.3"/><path d="M5.8 3.2V1.6h4.4v1.6" fill="none" stroke="#333" stroke-width="1.1"/><path d="M3.9 4.2v10.3h8.2V4.2" fill="none" stroke="#333" stroke-width="1.2"/><path d="M6.6 5.8v7.2M9.4 5.8v7.2" stroke="#333" stroke-width="1.1"/></svg>
<div style="position:absolute;left:862px;top:772px;width:30px;height:32px;background:#efefef;border:1px solid #bbb;border-radius:2px"></div>
<svg style="position:absolute;left:875px;top:781px;" width="4" height="14" viewBox="0 0 4 14"><rect x="1" y="1" width="2" height="2" fill="#333"/><rect x="1" y="6.5" width="2" height="2" fill="#333"/><rect x="1" y="12" width="2" height="2" fill="#333"/></svg>
<div style="position:absolute;left:906px;top:772px;width:59px;height:32px;background:#f2f2f2;border:1px solid #d8d8d8;border-radius:2px 0 0 2px"></div>
<div style="position:absolute;left:935px;top:772px;width:1px;height:32px;background:#d8d8d8"></div>
<div style="position:absolute;left:964px;top:772px;width:59px;height:32px;background:#efefef;border:1px solid #bbb;border-radius:0 2px 2px 0"></div>
<div style="position:absolute;left:993px;top:772px;width:1px;height:32px;background:#bbb"></div>
<svg style="position:absolute;left:971px;top:780px;" width="16" height="16" viewBox="0 0 16 16"><rect x="3.5" y="2.5" width="9" height="12" fill="none" stroke="#333" stroke-width="1.1"/><rect x="6" y="1" width="4" height="2.5" fill="#333"/></svg>
<svg style="position:absolute;left:1000px;top:780px;" width="16" height="16" viewBox="0 0 16 16"><circle cx="4.6" cy="2.9" r="2.1" fill="none" stroke="#333" stroke-width="1.3"/><circle cx="4.6" cy="13.1" r="2.1" fill="none" stroke="#333" stroke-width="1.3"/><path d="M5.3 4.9L6.6 8M5.3 11.1L6.6 8" fill="none" stroke="#333" stroke-width="1.3"/><path d="M6.2 7.3L14.3 2.9 15.4 4.5 7.6 9z M6.2 8.7L14.3 13.1 15.4 11.5 7.6 7z" fill="#333"/><circle cx="7" cy="8" r=".8" fill="#eee"/></svg>
<svg style="position:absolute;left:1039px;top:780px;" width="16" height="16" viewBox="0 0 16 16"><rect x="0" y="0" width="16" height="16" fill="#fff"/><rect x="0" y="0.0" width="16" height="1.3" fill="#c4384a"/><rect x="0" y="2.5" width="16" height="1.3" fill="#c4384a"/><rect x="0" y="5.0" width="16" height="1.3" fill="#c4384a"/><rect x="0" y="7.5" width="16" height="1.3" fill="#c4384a"/><rect x="0" y="10.0" width="16" height="1.3" fill="#c4384a"/><rect x="0" y="12.5" width="16" height="1.3" fill="#c4384a"/><rect x="0" y="15.0" width="16" height="1.3" fill="#c4384a"/><rect x="0" y="0" width="12" height="8.6" fill="#253a73"/></svg>
<div style="position:absolute;left:1058px;top:781.84px;font:normal 12px/12px 'Liberation Sans', sans-serif;white-space:nowrap;color:#222;">English</div>
<div style="position:absolute;left:1126px;top:772px;width:59px;height:32px;background:#efefef;border:1px solid #bbb;border-radius:2px"></div>
<div style="position:absolute;left:1155px;top:772px;width:1px;height:32px;background:#bbb"></div>
<svg style="position:absolute;left:1133px;top:780px;" width="16" height="16" viewBox="0 0 16 16"><rect x="0" y="0" width="16" height="16" fill="#c8102e"/><rect x="4.5" y="0" width="2.5" height="16" fill="#fff"/><rect x="0" y="6.8" width="16" height="2.4" fill="#fff"/></svg>
<svg style="position:absolute;left:1162px;top:780px;" width="16" height="16" viewBox="0 0 16 16"><rect x="0" y="0" width="16" height="5.4" fill="#000"/><rect x="0" y="5.4" width="16" height="5.3" fill="#dd0000"/><rect x="0" y="10.7" width="16" height="5.3" fill="#ffce00"/></svg>
<div style="position:absolute;left:583px;top:347px;width:165px;height:330px;background:#fff;border:1px solid #e3e3e3;box-shadow:0 1px 2px rgba(0,0,0,.08)"></div>
<div style="position:absolute;left:584px;top:348px;width:163px;height:28px;background:#f3f3f3"></div>
<div style="position:absolute;left:586px;top:350px;width:159px;height:24px;border:2px solid #e8970c;border-radius:3px"></div>
<svg style="position:absolute;left:589px;top:354px;" width="16" height="16" viewBox="0 0 16 16"><path d="M4.5 14.5H2.5V1.5H10.5L13.5 4.5V7.5" fill="none" stroke="#666" stroke-width="1.1" stroke-linejoin="round"/><path d="M10.5 1.5V4.5H13.5" fill="#fff" stroke="#666" stroke-width="1"/><ellipse cx="10.8" cy="12.2" rx="4.7" ry="3.2" fill="#eee" stroke="#666" stroke-width="1.1"/><circle cx="10.8" cy="12" r="2" fill="#666"/></svg>
<div style="position:absolute;left:608px;top:355.84px;font:normal 12px/12px 'Liberation Sans', sans-serif;white-space:nowrap;color:#666;">Show</div>
<svg style="position:absolute;left:589px;top:383px;" width="16" height="16" viewBox="0 0 16 16"><path d="M5.5 14.5H2.5V1.5H10.5L13.5 4.5V6.5" fill="none" stroke="#1a1a1a" stroke-width="1.1" stroke-linejoin="round"/><path d="M10.5 1.5V4.5H13.5" fill="#fff" stroke="#1a1a1a" stroke-width="1"/><path d="M6.3 15.8l.9-2.9 6.6-6.6 2 2-6.6 6.6z" fill="#1a1a1a"/><path d="M12.2 14.5h1.3" stroke="#1a1a1a" stroke-width="1.1"/></svg>
<div style="position:absolute;left:608px;top:384.84px;font:normal 12px/12px 'Liberation Sans', sans-serif;white-space:nowrap;color:#222;">Edit</div>
<svg style="position:absolute;left:589px;top:412px;" width="16" height="16" viewBox="0 0 16 16"><path d="M7 14.5H2.5V1.5H10.5L13.5 4.5V9" fill="none" stroke="#1a1a1a" stroke-width="1.1" stroke-linejoin="round"/><path d="M10.5 1.5V4.5H13.5" fill="#fff" stroke="#1a1a1a" stroke-width="1"/><path d="M12.3 9.6v6.4M9.1 12.8h6.4" stroke="#1a1a1a" stroke-width="1.7"/></svg>
<div style="position:absolute;left:608px;top:413.84px;font:normal 12px/12px 'Liberation Sans', sans-serif;white-space:nowrap;color:#222;">New</div>
<svg style="position:absolute;left:591px;top:441px;" width="16" height="16" viewBox="0 0 16 16"><rect x="5" y="2" width="2.5" height="2.3" fill="#1a1a1a"/><path d="M3 6H7.5V12.5H9V14H3V12.5H5V7.4H3z" fill="#1a1a1a"/></svg>
<div style="position:absolute;left:608px;top:442.84px;font:normal 12px/12px 'Liberation Sans', sans-serif;white-space:nowrap;color:#222;">Info</div>
<div style="position:absolute;left:584px;top:465px;width:163px;height:1px;background:#dcdcdc"></div>
<svg style="position:absolute;left:590px;top:473px;" width="16" height="16" viewBox="0 0 16 16"><rect x="3.5" y="2.5" width="9" height="12" fill="none" stroke="#1a1a1a" stroke-width="1.1"/><rect x="6" y="1" width="4" height="2.5" fill="#1a1a1a"/></svg>
<div style="position:absolute;left:608px;top:474.84px;font:normal 12px/12px 'Liberation Sans', sans-serif;white-space:nowrap;color:#222;">Copy</div>
<svg style="position:absolute;left:590px;top:502px;" width="16" height="16" viewBox="0 0 16 16"><circle cx="4.6" cy="2.9" r="2.1" fill="none" stroke="#1a1a1a" stroke-width="1.3"/><circle cx="4.6" cy="13.1" r="2.1" fill="none" stroke="#1a1a1a" stroke-width="1.3"/><path d="M5.3 4.9L6.6 8M5.3 11.1L6.6 8" fill="none" stroke="#1a1a1a" stroke-width="1.3"/><path d="M6.2 7.3L14.3 2.9 15.4 4.5 7.6 9z M6.2 8.7L14.3 13.1 15.4 11.5 7.6 7z" fill="#1a1a1a"/><circle cx="7" cy="8" r=".8" fill="#eee"/></svg>
<div style="position:absolute;left:608px;top:503.84px;font:normal 12px/12px 'Liberation Sans', sans-serif;white-space:nowrap;color:#222;">Cut</div>
<div style="position:absolute;left:584px;top:526px;width:163px;height:1px;background:#dcdcdc"></div>
<div style="position:absolute;left:589px;top:535.84px;font:normal 12px/12px 'Liberation Sans', sans-serif;white-space:nowrap;color:#222;">More options...</div>
<svg style="position:absolute;left:674px;top:537px;" width="5" height="9" viewBox="0 0 5 9"><path d="M0 0l5 4.5L0 9z" fill="#1a1a1a"/></svg>
<div style="position:absolute;left:584px;top:559px;width:163px;height:1px;background:#dcdcdc"></div>
<svg style="position:absolute;left:589px;top:567px;" width="16" height="16" viewBox="0 0 16 16"><rect x="0" y="3" width="16" height="10" rx="5" fill="#1a1a1a"/><circle cx="11" cy="8" r="2.9" fill="#fff"/></svg>
<div style="position:absolute;left:608px;top:568.84px;font:normal 12px/12px 'Liberation Sans', sans-serif;white-space:nowrap;color:#222;">Disable</div>
<svg style="position:absolute;left:590px;top:596px;" width="16" height="16" viewBox="0 0 16 16"><path d="M2.2 3.6h11.6" stroke="#1a1a1a" stroke-width="1.3"/><path d="M5.8 3.2V1.6h4.4v1.6" fill="none" stroke="#1a1a1a" stroke-width="1.1"/><path d="M3.9 4.2v10.3h8.2V4.2" fill="none" stroke="#1a1a1a" stroke-width="1.2"/><path d="M6.6 5.8v7.2M9.4 5.8v7.2" stroke="#1a1a1a" stroke-width="1.1"/></svg>
<div style="position:absolute;left:608px;top:597.84px;font:normal 12px/12px 'Liberation Sans', sans-serif;white-space:nowrap;color:#222;">Delete</div>
<svg style="position:absolute;left:590px;top:625px;" width="16" height="16" viewBox="0 0 16 16"><path d="M3.2 5.2A5.8 5.8 0 1 1 2.5 9.5" fill="none" stroke="#1a1a1a" stroke-width="1.5"/><path d="M.8 2.3L5.5 2.6 3 6.6z" fill="#1a1a1a"/><path d="M8.5 4.3v4.5H5.8" fill="none" stroke="#1a1a1a" stroke-width="1.5"/></svg>
<div style="position:absolute;left:608px;top:626.84px;font:normal 12px/12px 'Liberation Sans', sans-serif;white-space:nowrap;color:#222;">History/Undo</div>
<svg style="position:absolute;left:592.5px;top:654px;" width="10" height="16" viewBox="0 0 10 16"><path d="M3 .5h6L6.3 6.8H9.5L1.8 15.5l2-6.8H.5z" fill="#1a1a1a"/></svg>
<div style="position:absolute;left:608px;top:655.84px;font:normal 12px/12px 'Liberation Sans', sans-serif;white-space:nowrap;color:#222;">Clear cache for this page</div>
</div></body></html>
